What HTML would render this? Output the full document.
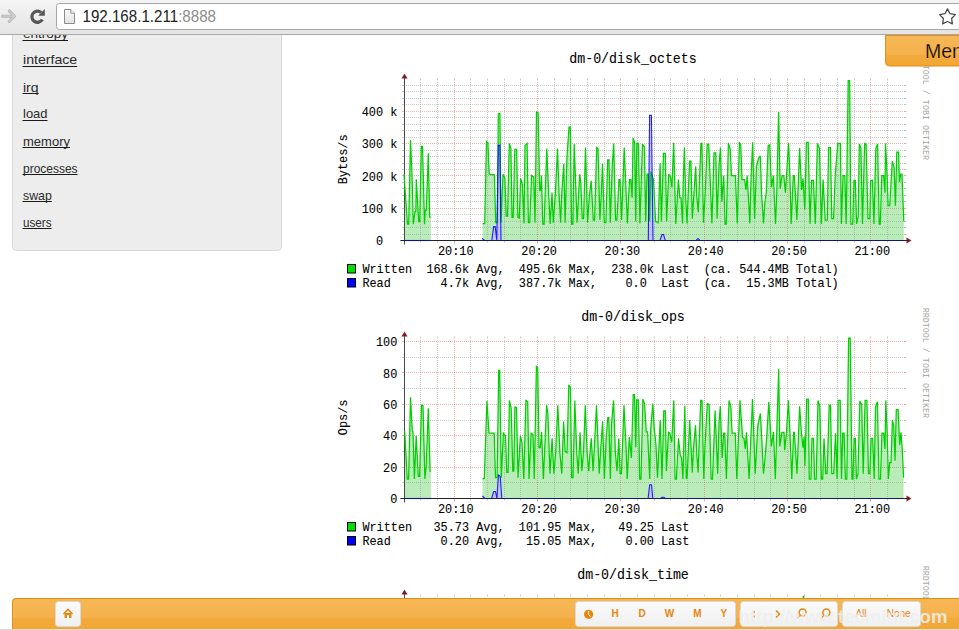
<!DOCTYPE html><html><head><meta charset="utf-8"><style>html,body{margin:0;padding:0;background:#fff;overflow:hidden;width:959px;height:630px}svg{display:block}</style></head><body>
<svg width="959" height="630" viewBox="0 0 959 630" shape-rendering="auto">
<defs><linearGradient id="chrome" x1="0" y1="0" x2="0" y2="1"><stop offset="0" stop-color="#f4f4f4"/><stop offset="1" stop-color="#e4e4e4"/></linearGradient><linearGradient id="orng" x1="0" y1="0" x2="0" y2="1"><stop offset="0" stop-color="#f6b756"/><stop offset="0.62" stop-color="#f5b24c"/><stop offset="0.66" stop-color="#f3aa3c"/><stop offset="1" stop-color="#f2a733"/></linearGradient><linearGradient id="btn" x1="0" y1="0" x2="0" y2="1"><stop offset="0" stop-color="#fafafa"/><stop offset="1" stop-color="#f0f0f0"/></linearGradient><linearGradient id="pg" x1="0" y1="0" x2="0" y2="1"><stop offset="0" stop-color="#fafafa"/><stop offset="1" stop-color="#e2e2e2"/></linearGradient></defs>
<rect x="12.5" y="-10" width="269" height="260.5" rx="4" ry="4" fill="#ededed" stroke="#d8d8d8" stroke-width="1"/>
<text x="23" y="37.9" font-family="'Liberation Sans', sans-serif" font-size="13.2" fill="#2a2a2a" textLength="45" lengthAdjust="spacingAndGlyphs">entropy</text>
<rect x="22.5" y="40" width="45.5" height="1" fill="#1a1a1a"/>
<text x="23" y="64.2" font-family="'Liberation Sans', sans-serif" font-size="13.2" fill="#2a2a2a" textLength="54.2" lengthAdjust="spacingAndGlyphs">interface</text>
<rect x="22.5" y="66" width="54.7" height="1" fill="#1a1a1a"/>
<text x="23" y="91.5" font-family="'Liberation Sans', sans-serif" font-size="13.2" fill="#2a2a2a" textLength="15.6" lengthAdjust="spacingAndGlyphs">irq</text>
<rect x="22.5" y="93" width="16.1" height="1" fill="#1a1a1a"/>
<text x="23" y="118.2" font-family="'Liberation Sans', sans-serif" font-size="13.2" fill="#2a2a2a" textLength="24.5" lengthAdjust="spacingAndGlyphs">load</text>
<rect x="22.5" y="120" width="25.0" height="1" fill="#1a1a1a"/>
<text x="23" y="145.5" font-family="'Liberation Sans', sans-serif" font-size="13.2" fill="#2a2a2a" textLength="47" lengthAdjust="spacingAndGlyphs">memory</text>
<rect x="22.5" y="147" width="47.5" height="1" fill="#1a1a1a"/>
<text x="23" y="172.5" font-family="'Liberation Sans', sans-serif" font-size="13.2" fill="#2a2a2a" textLength="54.6" lengthAdjust="spacingAndGlyphs">processes</text>
<rect x="22.5" y="174" width="55.1" height="1" fill="#1a1a1a"/>
<text x="23" y="199.5" font-family="'Liberation Sans', sans-serif" font-size="13.2" fill="#2a2a2a" textLength="28.8" lengthAdjust="spacingAndGlyphs">swap</text>
<rect x="22.5" y="201" width="29.3" height="1" fill="#1a1a1a"/>
<text x="23" y="226.5" font-family="'Liberation Sans', sans-serif" font-size="13.2" fill="#2a2a2a" textLength="28.5" lengthAdjust="spacingAndGlyphs">users</text>
<rect x="22.5" y="228" width="29.0" height="1" fill="#1a1a1a"/>
<text transform="translate(633,63) scale(1,1.1)" font-family="'Liberation Mono', monospace" font-size="13.3" text-anchor="middle" fill="#000" stroke="#000" stroke-width="0.08">dm-0/disk_octets</text>
<text transform="translate(347.2,159.4) rotate(-90) scale(1,1.1)" x="0" y="0" font-family="'Liberation Mono', monospace" font-size="11.9" text-anchor="middle" fill="#000" stroke="#000" stroke-width="0.08">Bytes/s</text>
<text transform="translate(929.5,49.80000000000001) rotate(90)" x="0" y="6.2" font-family="'Liberation Mono', monospace" font-size="8.35" fill="#a8a8a8">RRDTOOL / TOBI OETIKER</text>
<polygon points="404.0,240.5 404.0,174.2 407.5,224.2 408.7,224.2 410.5,140.0 412.0,175.0 413.3,224.2 415.0,211.7 415.8,211.7 416.3,179.2 418.7,221.7 419.7,221.7 421.3,146.3 422.5,146.3 424.5,224.2 425.3,210.0 426.3,210.0 428.3,153.3 429.7,217.0 430.8,217.0 430.8,240.5" fill="#b9ecb9"/>
<polygon points="482.6,240.5 482.6,223.5 484.7,223.5 486.5,141.5 487.9,142.8 489.2,174.2 494.4,174.8 495.7,222.7 497.3,222.7 498.3,114.0 499.9,113.5 501.0,222.7 503.0,174.2 504.9,178.2 506.2,216.0 507.5,216.0 509.3,143.4 510.9,148.6 512.0,217.4 513.2,217.4 514.8,149.4 516.6,149.4 517.9,217.4 519.3,218.0 520.6,178.2 522.4,184.7 524.0,223.5 525.0,145.4 527.1,143.4 528.4,222.7 529.7,222.7 531.6,175.5 533.7,176.9 535.0,222.7 536.5,111.9 538.1,112.7 539.7,190.0 540.7,190.0 541.5,175.5 542.8,224.0 544.1,224.0 546.8,148.6 548.6,192.6 550.2,224.0 552.0,192.6 553.3,222.7 555.4,192.6 557.5,148.6 559.0,192.6 560.6,222.7 561.7,194.0 563.8,163.8 565.1,222.7 566.9,158.5 569.0,127.1 570.3,127.1 571.6,224.0 572.9,224.0 574.2,144.1 577.1,222.7 579.7,174.2 580.8,182.0 582.3,218.7 583.6,218.7 585.5,147.5 587.6,222.7 589.4,195.2 591.2,180.8 593.3,220.0 594.6,220.0 596.7,147.5 598.0,148.6 599.9,220.0 601.2,195.2 602.5,163.8 604.3,222.7 605.9,222.7 607.7,159.8 609.0,159.8 610.3,222.7 612.2,166.4 613.7,143.6 615.6,220.0 616.9,220.0 619.0,179.5 620.0,179.5 621.6,220.0 624.2,147.5 627.4,223.5 629.5,179.5 630.8,179.5 632.1,197.8 633.1,138.1 634.7,142.8 635.7,221.4 636.8,143.4 638.4,143.4 639.9,223.5 642.5,144.1 644.4,146.8 645.7,221.4 647.0,174.2 648.3,174.2 649.6,221.4 650.9,171.6 653.5,179.5 655.6,221.4 658.2,222.7 660.1,163.2 661.4,221.4 663.5,153.3 665.3,153.3 666.6,221.4 668.7,174.2 670.5,176.9 671.9,187.3 673.7,142.8 675.8,224.0 678.4,179.5 679.9,197.8 681.0,197.8 682.6,223.5 683.1,186.0 684.4,147.5 685.7,197.8 687.0,223.5 689.6,161.2 690.9,161.2 692.3,218.7 694.1,191.3 695.7,166.4 696.7,195.2 698.3,212.2 700.9,143.4 701.9,143.4 703.5,222.7 705.3,191.3 707.2,144.1 708.7,144.1 710.6,190.0 711.9,223.5 714.0,152.8 715.8,152.8 717.1,218.7 719.0,165.0 720.5,147.5 721.8,201.7 723.7,175.5 725.0,224.0 726.3,224.0 728.4,142.8 730.2,149.4 731.5,175.5 735.4,175.5 737.3,223.5 739.4,142.8 740.7,144.1 742.0,179.5 744.6,179.5 745.9,190.0 747.2,175.5 749.8,223.5 751.2,172.9 752.7,142.3 754.6,218.7 756.4,166.4 758.5,158.5 760.3,155.9 761.6,193.9 763.5,223.5 764.8,203.0 766.3,192.6 768.2,145.4 769.7,144.9 771.5,187.3 773.4,175.5 775.5,224.0 776.8,192.6 778.6,111.9 780.2,188.6 782.0,175.5 783.8,175.5 785.4,192.6 786.5,175.5 788.6,142.8 789.9,175.5 791.2,224.0 793.3,175.5 794.3,175.5 796.9,220.0 799.6,148.1 801.6,190.0 803.0,178.2 804.8,209.6 806.4,142.3 808.2,142.3 810.0,224.0 811.6,180.3 813.4,180.3 815.3,224.0 817.4,143.4 819.5,148.6 821.3,224.0 823.1,179.5 825.2,220.0 827.3,220.0 828.6,147.5 830.4,147.5 831.8,218.7 833.6,218.7 835.2,175.5 837.8,143.4 840.4,143.4 841.4,224.0 843.0,175.5 844.8,175.5 846.2,224.0 848.2,80.7 849.6,80.7 850.9,224.0 852.7,224.0 854.0,180.3 855.3,180.3 856.6,224.0 858.2,216.1 859.3,144.1 860.9,148.0 862.5,224.0 864.6,143.4 866.1,144.1 868.0,218.7 869.8,218.7 870.6,180.3 872.4,180.3 874.0,224.0 875.8,148.6 877.6,144.1 879.2,224.0 880.3,224.0 881.8,175.5 883.7,175.5 885.0,192.6 885.5,143.4 887.1,174.2 888.1,205.7 889.7,205.7 892.3,161.2 894.1,167.7 895.4,205.7 896.8,152.0 898.6,152.0 899.4,182.1 900.7,174.2 902.0,174.2 903.8,221.4 903.8,240.5" fill="#b9ecb9"/>
<polygon points="404.0,240.5 404.0,240.5 430.8,240.5 430.8,240.5" fill="#c4c4fa"/>
<polygon points="482.1,240.5 482.1,238.4 484.7,240.5 491.8,240.5 493.6,226.6 495.2,226.6 496.8,240.5 498.3,145.4 499.9,145.4 501.0,240.5 648.3,240.5 649.6,115.3 651.4,115.3 653.0,240.5 660.1,240.5 661.9,234.5 663.5,234.5 665.3,240.5 696.0,240.5 697.5,238.8 698.5,238.8 700.0,240.5 903.8,240.5 903.8,240.5" fill="#c4c4fa"/>
<line x1="405.5" y1="85.5" x2="904.5" y2="85.5" stroke="rgba(140,140,140,0.45)" stroke-width="1" stroke-dasharray="1,1" shape-rendering="crispEdges"/>
<line x1="402.0" y1="85.5" x2="404.5" y2="85.5" stroke="rgba(140,140,140,0.45)" stroke-width="1"/>
<line x1="904.5" y1="85.5" x2="906.5" y2="85.5" stroke="rgba(140,140,140,0.45)" stroke-width="1"/>
<line x1="405.5" y1="91.5" x2="904.5" y2="91.5" stroke="rgba(140,140,140,0.45)" stroke-width="1" stroke-dasharray="1,1" shape-rendering="crispEdges"/>
<line x1="402.0" y1="91.5" x2="404.5" y2="91.5" stroke="rgba(140,140,140,0.45)" stroke-width="1"/>
<line x1="904.5" y1="91.5" x2="906.5" y2="91.5" stroke="rgba(140,140,140,0.45)" stroke-width="1"/>
<line x1="405.5" y1="98.5" x2="904.5" y2="98.5" stroke="rgba(140,140,140,0.45)" stroke-width="1" stroke-dasharray="1,1" shape-rendering="crispEdges"/>
<line x1="402.0" y1="98.5" x2="404.5" y2="98.5" stroke="rgba(140,140,140,0.45)" stroke-width="1"/>
<line x1="904.5" y1="98.5" x2="906.5" y2="98.5" stroke="rgba(140,140,140,0.45)" stroke-width="1"/>
<line x1="405.5" y1="104.5" x2="904.5" y2="104.5" stroke="rgba(140,140,140,0.45)" stroke-width="1" stroke-dasharray="1,1" shape-rendering="crispEdges"/>
<line x1="402.0" y1="104.5" x2="404.5" y2="104.5" stroke="rgba(140,140,140,0.45)" stroke-width="1"/>
<line x1="904.5" y1="104.5" x2="906.5" y2="104.5" stroke="rgba(140,140,140,0.45)" stroke-width="1"/>
<line x1="405.5" y1="111.5" x2="904.5" y2="111.5" stroke="rgba(222,79,79,0.45)" stroke-width="1" stroke-dasharray="1,1" shape-rendering="crispEdges"/>
<line x1="402.0" y1="111.5" x2="404.5" y2="111.5" stroke="rgba(222,79,79,0.45)" stroke-width="1"/>
<line x1="904.5" y1="111.5" x2="906.5" y2="111.5" stroke="rgba(222,79,79,0.45)" stroke-width="1"/>
<line x1="405.5" y1="117.5" x2="904.5" y2="117.5" stroke="rgba(140,140,140,0.45)" stroke-width="1" stroke-dasharray="1,1" shape-rendering="crispEdges"/>
<line x1="402.0" y1="117.5" x2="404.5" y2="117.5" stroke="rgba(140,140,140,0.45)" stroke-width="1"/>
<line x1="904.5" y1="117.5" x2="906.5" y2="117.5" stroke="rgba(140,140,140,0.45)" stroke-width="1"/>
<line x1="405.5" y1="124.5" x2="904.5" y2="124.5" stroke="rgba(140,140,140,0.45)" stroke-width="1" stroke-dasharray="1,1" shape-rendering="crispEdges"/>
<line x1="402.0" y1="124.5" x2="404.5" y2="124.5" stroke="rgba(140,140,140,0.45)" stroke-width="1"/>
<line x1="904.5" y1="124.5" x2="906.5" y2="124.5" stroke="rgba(140,140,140,0.45)" stroke-width="1"/>
<line x1="405.5" y1="130.5" x2="904.5" y2="130.5" stroke="rgba(140,140,140,0.45)" stroke-width="1" stroke-dasharray="1,1" shape-rendering="crispEdges"/>
<line x1="402.0" y1="130.5" x2="404.5" y2="130.5" stroke="rgba(140,140,140,0.45)" stroke-width="1"/>
<line x1="904.5" y1="130.5" x2="906.5" y2="130.5" stroke="rgba(140,140,140,0.45)" stroke-width="1"/>
<line x1="405.5" y1="137.5" x2="904.5" y2="137.5" stroke="rgba(140,140,140,0.45)" stroke-width="1" stroke-dasharray="1,1" shape-rendering="crispEdges"/>
<line x1="402.0" y1="137.5" x2="404.5" y2="137.5" stroke="rgba(140,140,140,0.45)" stroke-width="1"/>
<line x1="904.5" y1="137.5" x2="906.5" y2="137.5" stroke="rgba(140,140,140,0.45)" stroke-width="1"/>
<line x1="405.5" y1="143.5" x2="904.5" y2="143.5" stroke="rgba(222,79,79,0.45)" stroke-width="1" stroke-dasharray="1,1" shape-rendering="crispEdges"/>
<line x1="402.0" y1="143.5" x2="404.5" y2="143.5" stroke="rgba(222,79,79,0.45)" stroke-width="1"/>
<line x1="904.5" y1="143.5" x2="906.5" y2="143.5" stroke="rgba(222,79,79,0.45)" stroke-width="1"/>
<line x1="405.5" y1="150.5" x2="904.5" y2="150.5" stroke="rgba(140,140,140,0.45)" stroke-width="1" stroke-dasharray="1,1" shape-rendering="crispEdges"/>
<line x1="402.0" y1="150.5" x2="404.5" y2="150.5" stroke="rgba(140,140,140,0.45)" stroke-width="1"/>
<line x1="904.5" y1="150.5" x2="906.5" y2="150.5" stroke="rgba(140,140,140,0.45)" stroke-width="1"/>
<line x1="405.5" y1="156.5" x2="904.5" y2="156.5" stroke="rgba(140,140,140,0.45)" stroke-width="1" stroke-dasharray="1,1" shape-rendering="crispEdges"/>
<line x1="402.0" y1="156.5" x2="404.5" y2="156.5" stroke="rgba(140,140,140,0.45)" stroke-width="1"/>
<line x1="904.5" y1="156.5" x2="906.5" y2="156.5" stroke="rgba(140,140,140,0.45)" stroke-width="1"/>
<line x1="405.5" y1="163.5" x2="904.5" y2="163.5" stroke="rgba(140,140,140,0.45)" stroke-width="1" stroke-dasharray="1,1" shape-rendering="crispEdges"/>
<line x1="402.0" y1="163.5" x2="404.5" y2="163.5" stroke="rgba(140,140,140,0.45)" stroke-width="1"/>
<line x1="904.5" y1="163.5" x2="906.5" y2="163.5" stroke="rgba(140,140,140,0.45)" stroke-width="1"/>
<line x1="405.5" y1="169.5" x2="904.5" y2="169.5" stroke="rgba(140,140,140,0.45)" stroke-width="1" stroke-dasharray="1,1" shape-rendering="crispEdges"/>
<line x1="402.0" y1="169.5" x2="404.5" y2="169.5" stroke="rgba(140,140,140,0.45)" stroke-width="1"/>
<line x1="904.5" y1="169.5" x2="906.5" y2="169.5" stroke="rgba(140,140,140,0.45)" stroke-width="1"/>
<line x1="405.5" y1="175.5" x2="904.5" y2="175.5" stroke="rgba(222,79,79,0.45)" stroke-width="1" stroke-dasharray="1,1" shape-rendering="crispEdges"/>
<line x1="402.0" y1="175.5" x2="404.5" y2="175.5" stroke="rgba(222,79,79,0.45)" stroke-width="1"/>
<line x1="904.5" y1="175.5" x2="906.5" y2="175.5" stroke="rgba(222,79,79,0.45)" stroke-width="1"/>
<line x1="405.5" y1="182.5" x2="904.5" y2="182.5" stroke="rgba(140,140,140,0.45)" stroke-width="1" stroke-dasharray="1,1" shape-rendering="crispEdges"/>
<line x1="402.0" y1="182.5" x2="404.5" y2="182.5" stroke="rgba(140,140,140,0.45)" stroke-width="1"/>
<line x1="904.5" y1="182.5" x2="906.5" y2="182.5" stroke="rgba(140,140,140,0.45)" stroke-width="1"/>
<line x1="405.5" y1="188.5" x2="904.5" y2="188.5" stroke="rgba(140,140,140,0.45)" stroke-width="1" stroke-dasharray="1,1" shape-rendering="crispEdges"/>
<line x1="402.0" y1="188.5" x2="404.5" y2="188.5" stroke="rgba(140,140,140,0.45)" stroke-width="1"/>
<line x1="904.5" y1="188.5" x2="906.5" y2="188.5" stroke="rgba(140,140,140,0.45)" stroke-width="1"/>
<line x1="405.5" y1="195.5" x2="904.5" y2="195.5" stroke="rgba(140,140,140,0.45)" stroke-width="1" stroke-dasharray="1,1" shape-rendering="crispEdges"/>
<line x1="402.0" y1="195.5" x2="404.5" y2="195.5" stroke="rgba(140,140,140,0.45)" stroke-width="1"/>
<line x1="904.5" y1="195.5" x2="906.5" y2="195.5" stroke="rgba(140,140,140,0.45)" stroke-width="1"/>
<line x1="405.5" y1="201.5" x2="904.5" y2="201.5" stroke="rgba(140,140,140,0.45)" stroke-width="1" stroke-dasharray="1,1" shape-rendering="crispEdges"/>
<line x1="402.0" y1="201.5" x2="404.5" y2="201.5" stroke="rgba(140,140,140,0.45)" stroke-width="1"/>
<line x1="904.5" y1="201.5" x2="906.5" y2="201.5" stroke="rgba(140,140,140,0.45)" stroke-width="1"/>
<line x1="405.5" y1="208.5" x2="904.5" y2="208.5" stroke="rgba(222,79,79,0.45)" stroke-width="1" stroke-dasharray="1,1" shape-rendering="crispEdges"/>
<line x1="402.0" y1="208.5" x2="404.5" y2="208.5" stroke="rgba(222,79,79,0.45)" stroke-width="1"/>
<line x1="904.5" y1="208.5" x2="906.5" y2="208.5" stroke="rgba(222,79,79,0.45)" stroke-width="1"/>
<line x1="405.5" y1="214.5" x2="904.5" y2="214.5" stroke="rgba(140,140,140,0.45)" stroke-width="1" stroke-dasharray="1,1" shape-rendering="crispEdges"/>
<line x1="402.0" y1="214.5" x2="404.5" y2="214.5" stroke="rgba(140,140,140,0.45)" stroke-width="1"/>
<line x1="904.5" y1="214.5" x2="906.5" y2="214.5" stroke="rgba(140,140,140,0.45)" stroke-width="1"/>
<line x1="405.5" y1="221.5" x2="904.5" y2="221.5" stroke="rgba(140,140,140,0.45)" stroke-width="1" stroke-dasharray="1,1" shape-rendering="crispEdges"/>
<line x1="402.0" y1="221.5" x2="404.5" y2="221.5" stroke="rgba(140,140,140,0.45)" stroke-width="1"/>
<line x1="904.5" y1="221.5" x2="906.5" y2="221.5" stroke="rgba(140,140,140,0.45)" stroke-width="1"/>
<line x1="405.5" y1="227.5" x2="904.5" y2="227.5" stroke="rgba(140,140,140,0.45)" stroke-width="1" stroke-dasharray="1,1" shape-rendering="crispEdges"/>
<line x1="402.0" y1="227.5" x2="404.5" y2="227.5" stroke="rgba(140,140,140,0.45)" stroke-width="1"/>
<line x1="904.5" y1="227.5" x2="906.5" y2="227.5" stroke="rgba(140,140,140,0.45)" stroke-width="1"/>
<line x1="405.5" y1="234.5" x2="904.5" y2="234.5" stroke="rgba(140,140,140,0.45)" stroke-width="1" stroke-dasharray="1,1" shape-rendering="crispEdges"/>
<line x1="402.0" y1="234.5" x2="404.5" y2="234.5" stroke="rgba(140,140,140,0.45)" stroke-width="1"/>
<line x1="904.5" y1="234.5" x2="906.5" y2="234.5" stroke="rgba(140,140,140,0.45)" stroke-width="1"/>
<line x1="420.5" y1="80.5" x2="420.5" y2="240.5" stroke="rgba(140,140,140,0.45)" stroke-width="1" stroke-dasharray="1,1" stroke-dashoffset="1" shape-rendering="crispEdges"/>
<line x1="420.5" y1="78.5" x2="420.5" y2="80.5" stroke="rgba(140,140,140,0.45)" stroke-width="1"/>
<line x1="420.5" y1="240.5" x2="420.5" y2="242.5" stroke="rgba(140,140,140,0.45)" stroke-width="1"/>
<line x1="437.5" y1="80.5" x2="437.5" y2="240.5" stroke="rgba(140,140,140,0.45)" stroke-width="1" stroke-dasharray="1,1" stroke-dashoffset="1" shape-rendering="crispEdges"/>
<line x1="437.5" y1="78.5" x2="437.5" y2="80.5" stroke="rgba(140,140,140,0.45)" stroke-width="1"/>
<line x1="437.5" y1="240.5" x2="437.5" y2="242.5" stroke="rgba(140,140,140,0.45)" stroke-width="1"/>
<line x1="454.5" y1="80.5" x2="454.5" y2="240.5" stroke="rgba(222,79,79,0.45)" stroke-width="1" stroke-dasharray="1,1" stroke-dashoffset="1" shape-rendering="crispEdges"/>
<line x1="454.5" y1="78.5" x2="454.5" y2="80.5" stroke="rgba(222,79,79,0.45)" stroke-width="1"/>
<line x1="454.5" y1="240.5" x2="454.5" y2="243.5" stroke="rgba(222,79,79,0.45)" stroke-width="1"/>
<line x1="470.5" y1="80.5" x2="470.5" y2="240.5" stroke="rgba(140,140,140,0.45)" stroke-width="1" stroke-dasharray="1,1" stroke-dashoffset="1" shape-rendering="crispEdges"/>
<line x1="470.5" y1="78.5" x2="470.5" y2="80.5" stroke="rgba(140,140,140,0.45)" stroke-width="1"/>
<line x1="470.5" y1="240.5" x2="470.5" y2="242.5" stroke="rgba(140,140,140,0.45)" stroke-width="1"/>
<line x1="487.5" y1="80.5" x2="487.5" y2="240.5" stroke="rgba(140,140,140,0.45)" stroke-width="1" stroke-dasharray="1,1" stroke-dashoffset="1" shape-rendering="crispEdges"/>
<line x1="487.5" y1="78.5" x2="487.5" y2="80.5" stroke="rgba(140,140,140,0.45)" stroke-width="1"/>
<line x1="487.5" y1="240.5" x2="487.5" y2="242.5" stroke="rgba(140,140,140,0.45)" stroke-width="1"/>
<line x1="504.5" y1="80.5" x2="504.5" y2="240.5" stroke="rgba(140,140,140,0.45)" stroke-width="1" stroke-dasharray="1,1" stroke-dashoffset="1" shape-rendering="crispEdges"/>
<line x1="504.5" y1="78.5" x2="504.5" y2="80.5" stroke="rgba(140,140,140,0.45)" stroke-width="1"/>
<line x1="504.5" y1="240.5" x2="504.5" y2="242.5" stroke="rgba(140,140,140,0.45)" stroke-width="1"/>
<line x1="520.5" y1="80.5" x2="520.5" y2="240.5" stroke="rgba(140,140,140,0.45)" stroke-width="1" stroke-dasharray="1,1" stroke-dashoffset="1" shape-rendering="crispEdges"/>
<line x1="520.5" y1="78.5" x2="520.5" y2="80.5" stroke="rgba(140,140,140,0.45)" stroke-width="1"/>
<line x1="520.5" y1="240.5" x2="520.5" y2="242.5" stroke="rgba(140,140,140,0.45)" stroke-width="1"/>
<line x1="537.5" y1="80.5" x2="537.5" y2="240.5" stroke="rgba(222,79,79,0.45)" stroke-width="1" stroke-dasharray="1,1" stroke-dashoffset="1" shape-rendering="crispEdges"/>
<line x1="537.5" y1="78.5" x2="537.5" y2="80.5" stroke="rgba(222,79,79,0.45)" stroke-width="1"/>
<line x1="537.5" y1="240.5" x2="537.5" y2="243.5" stroke="rgba(222,79,79,0.45)" stroke-width="1"/>
<line x1="554.5" y1="80.5" x2="554.5" y2="240.5" stroke="rgba(140,140,140,0.45)" stroke-width="1" stroke-dasharray="1,1" stroke-dashoffset="1" shape-rendering="crispEdges"/>
<line x1="554.5" y1="78.5" x2="554.5" y2="80.5" stroke="rgba(140,140,140,0.45)" stroke-width="1"/>
<line x1="554.5" y1="240.5" x2="554.5" y2="242.5" stroke="rgba(140,140,140,0.45)" stroke-width="1"/>
<line x1="570.5" y1="80.5" x2="570.5" y2="240.5" stroke="rgba(140,140,140,0.45)" stroke-width="1" stroke-dasharray="1,1" stroke-dashoffset="1" shape-rendering="crispEdges"/>
<line x1="570.5" y1="78.5" x2="570.5" y2="80.5" stroke="rgba(140,140,140,0.45)" stroke-width="1"/>
<line x1="570.5" y1="240.5" x2="570.5" y2="242.5" stroke="rgba(140,140,140,0.45)" stroke-width="1"/>
<line x1="587.5" y1="80.5" x2="587.5" y2="240.5" stroke="rgba(140,140,140,0.45)" stroke-width="1" stroke-dasharray="1,1" stroke-dashoffset="1" shape-rendering="crispEdges"/>
<line x1="587.5" y1="78.5" x2="587.5" y2="80.5" stroke="rgba(140,140,140,0.45)" stroke-width="1"/>
<line x1="587.5" y1="240.5" x2="587.5" y2="242.5" stroke="rgba(140,140,140,0.45)" stroke-width="1"/>
<line x1="604.5" y1="80.5" x2="604.5" y2="240.5" stroke="rgba(140,140,140,0.45)" stroke-width="1" stroke-dasharray="1,1" stroke-dashoffset="1" shape-rendering="crispEdges"/>
<line x1="604.5" y1="78.5" x2="604.5" y2="80.5" stroke="rgba(140,140,140,0.45)" stroke-width="1"/>
<line x1="604.5" y1="240.5" x2="604.5" y2="242.5" stroke="rgba(140,140,140,0.45)" stroke-width="1"/>
<line x1="620.5" y1="80.5" x2="620.5" y2="240.5" stroke="rgba(222,79,79,0.45)" stroke-width="1" stroke-dasharray="1,1" stroke-dashoffset="1" shape-rendering="crispEdges"/>
<line x1="620.5" y1="78.5" x2="620.5" y2="80.5" stroke="rgba(222,79,79,0.45)" stroke-width="1"/>
<line x1="620.5" y1="240.5" x2="620.5" y2="243.5" stroke="rgba(222,79,79,0.45)" stroke-width="1"/>
<line x1="637.5" y1="80.5" x2="637.5" y2="240.5" stroke="rgba(140,140,140,0.45)" stroke-width="1" stroke-dasharray="1,1" stroke-dashoffset="1" shape-rendering="crispEdges"/>
<line x1="637.5" y1="78.5" x2="637.5" y2="80.5" stroke="rgba(140,140,140,0.45)" stroke-width="1"/>
<line x1="637.5" y1="240.5" x2="637.5" y2="242.5" stroke="rgba(140,140,140,0.45)" stroke-width="1"/>
<line x1="654.5" y1="80.5" x2="654.5" y2="240.5" stroke="rgba(140,140,140,0.45)" stroke-width="1" stroke-dasharray="1,1" stroke-dashoffset="1" shape-rendering="crispEdges"/>
<line x1="654.5" y1="78.5" x2="654.5" y2="80.5" stroke="rgba(140,140,140,0.45)" stroke-width="1"/>
<line x1="654.5" y1="240.5" x2="654.5" y2="242.5" stroke="rgba(140,140,140,0.45)" stroke-width="1"/>
<line x1="670.5" y1="80.5" x2="670.5" y2="240.5" stroke="rgba(140,140,140,0.45)" stroke-width="1" stroke-dasharray="1,1" stroke-dashoffset="1" shape-rendering="crispEdges"/>
<line x1="670.5" y1="78.5" x2="670.5" y2="80.5" stroke="rgba(140,140,140,0.45)" stroke-width="1"/>
<line x1="670.5" y1="240.5" x2="670.5" y2="242.5" stroke="rgba(140,140,140,0.45)" stroke-width="1"/>
<line x1="687.5" y1="80.5" x2="687.5" y2="240.5" stroke="rgba(140,140,140,0.45)" stroke-width="1" stroke-dasharray="1,1" stroke-dashoffset="1" shape-rendering="crispEdges"/>
<line x1="687.5" y1="78.5" x2="687.5" y2="80.5" stroke="rgba(140,140,140,0.45)" stroke-width="1"/>
<line x1="687.5" y1="240.5" x2="687.5" y2="242.5" stroke="rgba(140,140,140,0.45)" stroke-width="1"/>
<line x1="704.5" y1="80.5" x2="704.5" y2="240.5" stroke="rgba(222,79,79,0.45)" stroke-width="1" stroke-dasharray="1,1" stroke-dashoffset="1" shape-rendering="crispEdges"/>
<line x1="704.5" y1="78.5" x2="704.5" y2="80.5" stroke="rgba(222,79,79,0.45)" stroke-width="1"/>
<line x1="704.5" y1="240.5" x2="704.5" y2="243.5" stroke="rgba(222,79,79,0.45)" stroke-width="1"/>
<line x1="720.5" y1="80.5" x2="720.5" y2="240.5" stroke="rgba(140,140,140,0.45)" stroke-width="1" stroke-dasharray="1,1" stroke-dashoffset="1" shape-rendering="crispEdges"/>
<line x1="720.5" y1="78.5" x2="720.5" y2="80.5" stroke="rgba(140,140,140,0.45)" stroke-width="1"/>
<line x1="720.5" y1="240.5" x2="720.5" y2="242.5" stroke="rgba(140,140,140,0.45)" stroke-width="1"/>
<line x1="737.5" y1="80.5" x2="737.5" y2="240.5" stroke="rgba(140,140,140,0.45)" stroke-width="1" stroke-dasharray="1,1" stroke-dashoffset="1" shape-rendering="crispEdges"/>
<line x1="737.5" y1="78.5" x2="737.5" y2="80.5" stroke="rgba(140,140,140,0.45)" stroke-width="1"/>
<line x1="737.5" y1="240.5" x2="737.5" y2="242.5" stroke="rgba(140,140,140,0.45)" stroke-width="1"/>
<line x1="754.5" y1="80.5" x2="754.5" y2="240.5" stroke="rgba(140,140,140,0.45)" stroke-width="1" stroke-dasharray="1,1" stroke-dashoffset="1" shape-rendering="crispEdges"/>
<line x1="754.5" y1="78.5" x2="754.5" y2="80.5" stroke="rgba(140,140,140,0.45)" stroke-width="1"/>
<line x1="754.5" y1="240.5" x2="754.5" y2="242.5" stroke="rgba(140,140,140,0.45)" stroke-width="1"/>
<line x1="770.5" y1="80.5" x2="770.5" y2="240.5" stroke="rgba(140,140,140,0.45)" stroke-width="1" stroke-dasharray="1,1" stroke-dashoffset="1" shape-rendering="crispEdges"/>
<line x1="770.5" y1="78.5" x2="770.5" y2="80.5" stroke="rgba(140,140,140,0.45)" stroke-width="1"/>
<line x1="770.5" y1="240.5" x2="770.5" y2="242.5" stroke="rgba(140,140,140,0.45)" stroke-width="1"/>
<line x1="787.5" y1="80.5" x2="787.5" y2="240.5" stroke="rgba(222,79,79,0.45)" stroke-width="1" stroke-dasharray="1,1" stroke-dashoffset="1" shape-rendering="crispEdges"/>
<line x1="787.5" y1="78.5" x2="787.5" y2="80.5" stroke="rgba(222,79,79,0.45)" stroke-width="1"/>
<line x1="787.5" y1="240.5" x2="787.5" y2="243.5" stroke="rgba(222,79,79,0.45)" stroke-width="1"/>
<line x1="804.5" y1="80.5" x2="804.5" y2="240.5" stroke="rgba(140,140,140,0.45)" stroke-width="1" stroke-dasharray="1,1" stroke-dashoffset="1" shape-rendering="crispEdges"/>
<line x1="804.5" y1="78.5" x2="804.5" y2="80.5" stroke="rgba(140,140,140,0.45)" stroke-width="1"/>
<line x1="804.5" y1="240.5" x2="804.5" y2="242.5" stroke="rgba(140,140,140,0.45)" stroke-width="1"/>
<line x1="820.5" y1="80.5" x2="820.5" y2="240.5" stroke="rgba(140,140,140,0.45)" stroke-width="1" stroke-dasharray="1,1" stroke-dashoffset="1" shape-rendering="crispEdges"/>
<line x1="820.5" y1="78.5" x2="820.5" y2="80.5" stroke="rgba(140,140,140,0.45)" stroke-width="1"/>
<line x1="820.5" y1="240.5" x2="820.5" y2="242.5" stroke="rgba(140,140,140,0.45)" stroke-width="1"/>
<line x1="837.5" y1="80.5" x2="837.5" y2="240.5" stroke="rgba(140,140,140,0.45)" stroke-width="1" stroke-dasharray="1,1" stroke-dashoffset="1" shape-rendering="crispEdges"/>
<line x1="837.5" y1="78.5" x2="837.5" y2="80.5" stroke="rgba(140,140,140,0.45)" stroke-width="1"/>
<line x1="837.5" y1="240.5" x2="837.5" y2="242.5" stroke="rgba(140,140,140,0.45)" stroke-width="1"/>
<line x1="854.5" y1="80.5" x2="854.5" y2="240.5" stroke="rgba(140,140,140,0.45)" stroke-width="1" stroke-dasharray="1,1" stroke-dashoffset="1" shape-rendering="crispEdges"/>
<line x1="854.5" y1="78.5" x2="854.5" y2="80.5" stroke="rgba(140,140,140,0.45)" stroke-width="1"/>
<line x1="854.5" y1="240.5" x2="854.5" y2="242.5" stroke="rgba(140,140,140,0.45)" stroke-width="1"/>
<line x1="870.5" y1="80.5" x2="870.5" y2="240.5" stroke="rgba(222,79,79,0.45)" stroke-width="1" stroke-dasharray="1,1" stroke-dashoffset="1" shape-rendering="crispEdges"/>
<line x1="870.5" y1="78.5" x2="870.5" y2="80.5" stroke="rgba(222,79,79,0.45)" stroke-width="1"/>
<line x1="870.5" y1="240.5" x2="870.5" y2="243.5" stroke="rgba(222,79,79,0.45)" stroke-width="1"/>
<line x1="887.5" y1="80.5" x2="887.5" y2="240.5" stroke="rgba(140,140,140,0.45)" stroke-width="1" stroke-dasharray="1,1" stroke-dashoffset="1" shape-rendering="crispEdges"/>
<line x1="887.5" y1="78.5" x2="887.5" y2="80.5" stroke="rgba(140,140,140,0.45)" stroke-width="1"/>
<line x1="887.5" y1="240.5" x2="887.5" y2="242.5" stroke="rgba(140,140,140,0.45)" stroke-width="1"/>
<line x1="400.5" y1="240.5" x2="908.5" y2="240.5" stroke="#222" stroke-width="1"/>
<line x1="404.5" y1="244.5" x2="404.5" y2="76.5" stroke="#4a4a4a" stroke-width="1"/>
<polygon points="906.5,237.5 906.5,243.5 911.5,240.5" fill="#801f1f"/>
<polygon points="401.5,78.5 407.5,78.5 404.5,73.5" fill="#801f1f"/>
<polyline points="404.0,174.2 407.5,224.2 408.7,224.2 410.5,140.0 412.0,175.0 413.3,224.2 415.0,211.7 415.8,211.7 416.3,179.2 418.7,221.7 419.7,221.7 421.3,146.3 422.5,146.3 424.5,224.2 425.3,210.0 426.3,210.0 428.3,153.3 429.7,217.0 430.8,217.0" fill="none" stroke="#00d000" stroke-width="1.25" stroke-linejoin="miter" stroke-miterlimit="3"/>
<polyline points="482.6,223.5 484.7,223.5 486.5,141.5 487.9,142.8 489.2,174.2 494.4,174.8 495.7,222.7 497.3,222.7 498.3,114.0 499.9,113.5 501.0,222.7 503.0,174.2 504.9,178.2 506.2,216.0 507.5,216.0 509.3,143.4 510.9,148.6 512.0,217.4 513.2,217.4 514.8,149.4 516.6,149.4 517.9,217.4 519.3,218.0 520.6,178.2 522.4,184.7 524.0,223.5 525.0,145.4 527.1,143.4 528.4,222.7 529.7,222.7 531.6,175.5 533.7,176.9 535.0,222.7 536.5,111.9 538.1,112.7 539.7,190.0 540.7,190.0 541.5,175.5 542.8,224.0 544.1,224.0 546.8,148.6 548.6,192.6 550.2,224.0 552.0,192.6 553.3,222.7 555.4,192.6 557.5,148.6 559.0,192.6 560.6,222.7 561.7,194.0 563.8,163.8 565.1,222.7 566.9,158.5 569.0,127.1 570.3,127.1 571.6,224.0 572.9,224.0 574.2,144.1 577.1,222.7 579.7,174.2 580.8,182.0 582.3,218.7 583.6,218.7 585.5,147.5 587.6,222.7 589.4,195.2 591.2,180.8 593.3,220.0 594.6,220.0 596.7,147.5 598.0,148.6 599.9,220.0 601.2,195.2 602.5,163.8 604.3,222.7 605.9,222.7 607.7,159.8 609.0,159.8 610.3,222.7 612.2,166.4 613.7,143.6 615.6,220.0 616.9,220.0 619.0,179.5 620.0,179.5 621.6,220.0 624.2,147.5 627.4,223.5 629.5,179.5 630.8,179.5 632.1,197.8 633.1,138.1 634.7,142.8 635.7,221.4 636.8,143.4 638.4,143.4 639.9,223.5 642.5,144.1 644.4,146.8 645.7,221.4 647.0,174.2 648.3,174.2 649.6,221.4 650.9,171.6 653.5,179.5 655.6,221.4 658.2,222.7 660.1,163.2 661.4,221.4 663.5,153.3 665.3,153.3 666.6,221.4 668.7,174.2 670.5,176.9 671.9,187.3 673.7,142.8 675.8,224.0 678.4,179.5 679.9,197.8 681.0,197.8 682.6,223.5 683.1,186.0 684.4,147.5 685.7,197.8 687.0,223.5 689.6,161.2 690.9,161.2 692.3,218.7 694.1,191.3 695.7,166.4 696.7,195.2 698.3,212.2 700.9,143.4 701.9,143.4 703.5,222.7 705.3,191.3 707.2,144.1 708.7,144.1 710.6,190.0 711.9,223.5 714.0,152.8 715.8,152.8 717.1,218.7 719.0,165.0 720.5,147.5 721.8,201.7 723.7,175.5 725.0,224.0 726.3,224.0 728.4,142.8 730.2,149.4 731.5,175.5 735.4,175.5 737.3,223.5 739.4,142.8 740.7,144.1 742.0,179.5 744.6,179.5 745.9,190.0 747.2,175.5 749.8,223.5 751.2,172.9 752.7,142.3 754.6,218.7 756.4,166.4 758.5,158.5 760.3,155.9 761.6,193.9 763.5,223.5 764.8,203.0 766.3,192.6 768.2,145.4 769.7,144.9 771.5,187.3 773.4,175.5 775.5,224.0 776.8,192.6 778.6,111.9 780.2,188.6 782.0,175.5 783.8,175.5 785.4,192.6 786.5,175.5 788.6,142.8 789.9,175.5 791.2,224.0 793.3,175.5 794.3,175.5 796.9,220.0 799.6,148.1 801.6,190.0 803.0,178.2 804.8,209.6 806.4,142.3 808.2,142.3 810.0,224.0 811.6,180.3 813.4,180.3 815.3,224.0 817.4,143.4 819.5,148.6 821.3,224.0 823.1,179.5 825.2,220.0 827.3,220.0 828.6,147.5 830.4,147.5 831.8,218.7 833.6,218.7 835.2,175.5 837.8,143.4 840.4,143.4 841.4,224.0 843.0,175.5 844.8,175.5 846.2,224.0 848.2,80.7 849.6,80.7 850.9,224.0 852.7,224.0 854.0,180.3 855.3,180.3 856.6,224.0 858.2,216.1 859.3,144.1 860.9,148.0 862.5,224.0 864.6,143.4 866.1,144.1 868.0,218.7 869.8,218.7 870.6,180.3 872.4,180.3 874.0,224.0 875.8,148.6 877.6,144.1 879.2,224.0 880.3,224.0 881.8,175.5 883.7,175.5 885.0,192.6 885.5,143.4 887.1,174.2 888.1,205.7 889.7,205.7 892.3,161.2 894.1,167.7 895.4,205.7 896.8,152.0 898.6,152.0 899.4,182.1 900.7,174.2 902.0,174.2 903.8,221.4" fill="none" stroke="#00d000" stroke-width="1.25" stroke-linejoin="miter" stroke-miterlimit="3"/>
<polyline points="404.0,240.5 430.8,240.5" fill="none" stroke="#0000ff" stroke-width="1.1" stroke-opacity="0.85" stroke-linejoin="miter" stroke-miterlimit="3"/>
<polyline points="482.1,238.4 484.7,240.5 491.8,240.5 493.6,226.6 495.2,226.6 496.8,240.5 498.3,145.4 499.9,145.4 501.0,240.5 648.3,240.5 649.6,115.3 651.4,115.3 653.0,240.5 660.1,240.5 661.9,234.5 663.5,234.5 665.3,240.5 696.0,240.5 697.5,238.8 698.5,238.8 700.0,240.5 903.8,240.5" fill="none" stroke="#0000ff" stroke-width="1.1" stroke-opacity="0.85" stroke-linejoin="miter" stroke-miterlimit="3"/>
<line x1="400.5" y1="240.5" x2="908.5" y2="240.5" stroke="#222" stroke-opacity="0.5" stroke-width="1"/>
<text transform="translate(397.4,116.2) scale(1,1.1)" font-family="'Liberation Mono', monospace" font-size="11.9" text-anchor="end" fill="#000" stroke="#000" stroke-width="0.08">400 k</text>
<text transform="translate(397.4,148.4) scale(1,1.1)" font-family="'Liberation Mono', monospace" font-size="11.9" text-anchor="end" fill="#000" stroke="#000" stroke-width="0.08">300 k</text>
<text transform="translate(397.4,180.70000000000002) scale(1,1.1)" font-family="'Liberation Mono', monospace" font-size="11.9" text-anchor="end" fill="#000" stroke="#000" stroke-width="0.08">200 k</text>
<text transform="translate(397.4,212.9) scale(1,1.1)" font-family="'Liberation Mono', monospace" font-size="11.9" text-anchor="end" fill="#000" stroke="#000" stroke-width="0.08">100 k</text>
<text transform="translate(383.2,245.10000000000002) scale(1,1.1)" font-family="'Liberation Mono', monospace" font-size="11.9" text-anchor="end" fill="#000" stroke="#000" stroke-width="0.08">0</text>
<text transform="translate(455.8,254.6) scale(1,1.1)" font-family="'Liberation Mono', monospace" font-size="11.9" text-anchor="middle" fill="#000" stroke="#000" stroke-width="0.08">20:10</text>
<text transform="translate(539.1,254.6) scale(1,1.1)" font-family="'Liberation Mono', monospace" font-size="11.9" text-anchor="middle" fill="#000" stroke="#000" stroke-width="0.08">20:20</text>
<text transform="translate(622.4,254.6) scale(1,1.1)" font-family="'Liberation Mono', monospace" font-size="11.9" text-anchor="middle" fill="#000" stroke="#000" stroke-width="0.08">20:30</text>
<text transform="translate(705.7,254.6) scale(1,1.1)" font-family="'Liberation Mono', monospace" font-size="11.9" text-anchor="middle" fill="#000" stroke="#000" stroke-width="0.08">20:40</text>
<text transform="translate(789.0,254.6) scale(1,1.1)" font-family="'Liberation Mono', monospace" font-size="11.9" text-anchor="middle" fill="#000" stroke="#000" stroke-width="0.08">20:50</text>
<text transform="translate(872.3,254.6) scale(1,1.1)" font-family="'Liberation Mono', monospace" font-size="11.9" text-anchor="middle" fill="#000" stroke="#000" stroke-width="0.08">21:00</text>
<rect x="347.5" y="264.5" width="8" height="8.5" fill="#00dd00" stroke="#000" stroke-width="1"/>
<rect x="347.5" y="278.5" width="8" height="8.5" fill="#0000ff" stroke="#000" stroke-width="1"/>
<text transform="translate(362.4,272.6) scale(1,1.1)" font-family="'Liberation Mono', monospace" font-size="11.86" fill="#000" stroke="#000" stroke-width="0.08" xml:space="preserve">Written  168.6k Avg,  495.6k Max,  238.0k Last  (ca. 544.4MB Total)</text>
<text transform="translate(362.4,286.90000000000003) scale(1,1.1)" font-family="'Liberation Mono', monospace" font-size="11.86" fill="#000" stroke="#000" stroke-width="0.08" xml:space="preserve">Read       4.7k Avg,  387.7k Max,    0.0  Last  (ca.  15.3MB Total)</text>
<text transform="translate(633,321) scale(1,1.1)" font-family="'Liberation Mono', monospace" font-size="13.3" text-anchor="middle" fill="#000" stroke="#000" stroke-width="0.08">dm-0/disk_ops</text>
<text transform="translate(347.2,417.4) rotate(-90) scale(1,1.1)" x="0" y="0" font-family="'Liberation Mono', monospace" font-size="11.9" text-anchor="middle" fill="#000" stroke="#000" stroke-width="0.08">Ops/s</text>
<text transform="translate(929.5,307.8) rotate(90)" x="0" y="6.2" font-family="'Liberation Mono', monospace" font-size="8.35" fill="#a8a8a8">RRDTOOL / TOBI OETIKER</text>
<polygon points="404.7,498.5 404.7,431.3 407.3,479.0 408.6,479.0 410.5,397.3 412.3,431.3 413.0,431.8 414.4,479.0 416.2,435.8 418.3,476.4 419.6,476.4 421.5,405.2 423.0,405.7 424.9,479.0 426.2,465.9 428.3,408.3 430.1,471.1 430.9,471.1 430.9,498.5" fill="#b9ecb9"/>
<polygon points="482.5,498.5 482.5,478.5 484.3,478.5 486.9,401.0 489.0,433.2 494.2,433.2 495.5,477.7 497.1,477.7 498.7,370.3 499.7,370.3 501.3,477.7 503.4,433.2 505.5,435.8 506.8,472.4 508.1,472.4 509.4,400.4 511.2,408.3 512.8,471.1 513.8,471.1 514.9,407.0 516.5,407.5 518.0,477.7 520.4,435.8 522.0,442.3 523.8,479.0 525.9,400.4 527.7,401.5 529.0,479.0 531.1,433.2 533.0,434.5 534.3,479.0 536.4,366.4 537.7,367.7 539.0,447.6 540.3,447.6 541.6,431.9 543.4,479.0 546.6,405.2 547.9,413.5 550.0,473.7 552.1,438.4 553.9,473.7 555.7,451.5 557.8,405.2 559.9,452.8 561.8,473.7 563.6,421.4 565.2,451.5 567.0,452.8 568.8,384.7 570.4,387.4 571.7,477.7 573.0,477.7 574.8,400.4 576.7,451.5 578.2,473.7 580.1,432.4 581.9,471.1 583.5,451.5 585.3,405.2 587.1,452.8 588.7,471.1 590.5,446.3 591.3,438.4 593.1,471.1 596.5,405.2 599.2,473.7 600.5,452.8 602.6,421.4 604.4,479.0 606.2,437.1 607.8,417.5 608.8,417.5 610.4,479.0 611.5,424.0 613.6,400.4 615.4,452.8 617.0,471.1 618.8,438.4 620.1,473.7 621.4,473.7 624.0,405.2 626.1,447.6 627.2,479.0 629.3,437.1 631.4,458.0 633.2,394.7 634.5,394.7 635.8,447.6 636.6,399.9 638.4,399.9 639.7,479.0 641.0,479.0 642.9,399.1 644.5,403.6 646.3,431.9 647.6,431.9 649.7,479.0 650.7,429.2 652.8,403.6 654.1,426.6 656.0,445.0 657.5,477.7 660.2,420.1 662.0,479.0 663.8,410.9 665.4,410.9 666.4,471.1 668.5,432.4 669.8,433.2 671.7,442.3 673.8,400.4 675.1,479.0 676.4,479.0 678.5,438.4 680.3,455.4 681.6,458.0 682.9,479.0 684.8,405.7 686.3,479.0 687.1,477.7 689.7,420.1 692.3,472.4 693.4,448.9 695.5,425.3 696.8,454.1 698.1,472.4 700.7,400.4 702.0,400.4 703.8,479.0 704.9,447.6 707.3,403.6 709.1,404.4 711.2,479.0 712.5,479.0 715.1,410.4 717.7,473.7 719.0,422.7 720.3,406.2 722.2,458.0 723.7,433.2 724.8,433.2 726.4,479.0 729.0,400.4 730.8,406.2 732.1,433.2 735.3,433.2 736.8,479.0 740.0,400.4 742.6,437.6 744.0,438.4 745.2,448.9 746.5,432.4 749.1,479.0 752.5,399.1 755.2,473.7 757.8,425.3 760.4,413.5 762.2,447.6 763.5,473.7 764.8,460.7 766.7,437.1 768.8,401.8 771.4,446.3 773.5,431.9 775.3,479.0 778.7,369.0 779.8,446.3 781.9,432.4 784.0,432.4 784.7,450.2 786.5,431.9 788.4,400.4 789.9,431.9 791.8,479.0 793.6,432.4 794.4,432.4 797.0,473.7 799.6,406.2 801.5,433.2 803.0,447.6 804.1,436.6 804.9,465.9 806.7,399.1 808.3,399.1 809.3,479.0 810.9,479.0 811.9,438.4 813.5,438.4 814.6,479.0 816.2,479.0 818.0,400.4 819.8,406.2 821.4,479.0 822.7,479.0 824.0,438.4 825.8,473.7 827.1,473.7 829.2,405.2 830.5,405.2 831.8,473.7 833.7,473.7 835.5,433.2 837.1,479.0 838.1,400.4 840.2,400.4 841.5,479.0 842.8,433.2 844.1,433.2 845.4,479.0 846.8,479.0 848.6,338.1 850.2,338.1 852.0,479.0 853.0,479.0 854.1,438.4 855.4,438.4 856.4,479.0 858.0,473.7 859.8,401.0 861.7,404.4 863.2,473.7 865.1,400.4 866.9,400.4 868.5,473.7 869.8,473.7 871.1,438.4 872.7,438.4 874.2,479.0 875.5,407.0 877.4,401.8 879.0,479.0 880.5,479.0 881.9,433.2 883.7,433.2 885.0,448.9 885.8,400.4 887.1,430.6 888.4,479.0 889.7,462.7 891.0,462.7 892.4,420.1 893.7,425.3 895.0,460.7 896.3,409.6 898.1,409.6 899.7,445.0 901.0,432.4 902.3,450.2 903.6,477.7 903.6,498.5" fill="#b9ecb9"/>
<polygon points="404.0,498.5 404.0,498.5 430.9,498.5 430.9,498.5" fill="#c4c4fa"/>
<polygon points="482.5,498.5 482.5,496.0 485.0,498.5 491.6,498.5 493.7,491.5 495.5,491.5 496.9,498.5 498.4,475.0 500.2,476.4 501.8,498.5 648.1,498.5 649.7,484.7 651.5,484.7 652.8,498.5 660.7,498.5 662.0,497.3 663.8,497.3 665.4,498.5 903.6,498.5 903.6,498.5" fill="#c4c4fa"/>
<line x1="405.5" y1="341.5" x2="904.5" y2="341.5" stroke="rgba(222,79,79,0.45)" stroke-width="1" stroke-dasharray="1,1" shape-rendering="crispEdges"/>
<line x1="402.0" y1="341.5" x2="404.5" y2="341.5" stroke="rgba(222,79,79,0.45)" stroke-width="1"/>
<line x1="904.5" y1="341.5" x2="906.5" y2="341.5" stroke="rgba(222,79,79,0.45)" stroke-width="1"/>
<line x1="405.5" y1="357.5" x2="904.5" y2="357.5" stroke="rgba(140,140,140,0.45)" stroke-width="1" stroke-dasharray="1,1" shape-rendering="crispEdges"/>
<line x1="402.0" y1="357.5" x2="404.5" y2="357.5" stroke="rgba(140,140,140,0.45)" stroke-width="1"/>
<line x1="904.5" y1="357.5" x2="906.5" y2="357.5" stroke="rgba(140,140,140,0.45)" stroke-width="1"/>
<line x1="405.5" y1="372.5" x2="904.5" y2="372.5" stroke="rgba(222,79,79,0.45)" stroke-width="1" stroke-dasharray="1,1" shape-rendering="crispEdges"/>
<line x1="402.0" y1="372.5" x2="404.5" y2="372.5" stroke="rgba(222,79,79,0.45)" stroke-width="1"/>
<line x1="904.5" y1="372.5" x2="906.5" y2="372.5" stroke="rgba(222,79,79,0.45)" stroke-width="1"/>
<line x1="405.5" y1="388.5" x2="904.5" y2="388.5" stroke="rgba(140,140,140,0.45)" stroke-width="1" stroke-dasharray="1,1" shape-rendering="crispEdges"/>
<line x1="402.0" y1="388.5" x2="404.5" y2="388.5" stroke="rgba(140,140,140,0.45)" stroke-width="1"/>
<line x1="904.5" y1="388.5" x2="906.5" y2="388.5" stroke="rgba(140,140,140,0.45)" stroke-width="1"/>
<line x1="405.5" y1="404.5" x2="904.5" y2="404.5" stroke="rgba(222,79,79,0.45)" stroke-width="1" stroke-dasharray="1,1" shape-rendering="crispEdges"/>
<line x1="402.0" y1="404.5" x2="404.5" y2="404.5" stroke="rgba(222,79,79,0.45)" stroke-width="1"/>
<line x1="904.5" y1="404.5" x2="906.5" y2="404.5" stroke="rgba(222,79,79,0.45)" stroke-width="1"/>
<line x1="405.5" y1="420.5" x2="904.5" y2="420.5" stroke="rgba(140,140,140,0.45)" stroke-width="1" stroke-dasharray="1,1" shape-rendering="crispEdges"/>
<line x1="402.0" y1="420.5" x2="404.5" y2="420.5" stroke="rgba(140,140,140,0.45)" stroke-width="1"/>
<line x1="904.5" y1="420.5" x2="906.5" y2="420.5" stroke="rgba(140,140,140,0.45)" stroke-width="1"/>
<line x1="405.5" y1="435.5" x2="904.5" y2="435.5" stroke="rgba(222,79,79,0.45)" stroke-width="1" stroke-dasharray="1,1" shape-rendering="crispEdges"/>
<line x1="402.0" y1="435.5" x2="404.5" y2="435.5" stroke="rgba(222,79,79,0.45)" stroke-width="1"/>
<line x1="904.5" y1="435.5" x2="906.5" y2="435.5" stroke="rgba(222,79,79,0.45)" stroke-width="1"/>
<line x1="405.5" y1="451.5" x2="904.5" y2="451.5" stroke="rgba(140,140,140,0.45)" stroke-width="1" stroke-dasharray="1,1" shape-rendering="crispEdges"/>
<line x1="402.0" y1="451.5" x2="404.5" y2="451.5" stroke="rgba(140,140,140,0.45)" stroke-width="1"/>
<line x1="904.5" y1="451.5" x2="906.5" y2="451.5" stroke="rgba(140,140,140,0.45)" stroke-width="1"/>
<line x1="405.5" y1="467.5" x2="904.5" y2="467.5" stroke="rgba(222,79,79,0.45)" stroke-width="1" stroke-dasharray="1,1" shape-rendering="crispEdges"/>
<line x1="402.0" y1="467.5" x2="404.5" y2="467.5" stroke="rgba(222,79,79,0.45)" stroke-width="1"/>
<line x1="904.5" y1="467.5" x2="906.5" y2="467.5" stroke="rgba(222,79,79,0.45)" stroke-width="1"/>
<line x1="405.5" y1="482.5" x2="904.5" y2="482.5" stroke="rgba(140,140,140,0.45)" stroke-width="1" stroke-dasharray="1,1" shape-rendering="crispEdges"/>
<line x1="402.0" y1="482.5" x2="404.5" y2="482.5" stroke="rgba(140,140,140,0.45)" stroke-width="1"/>
<line x1="904.5" y1="482.5" x2="906.5" y2="482.5" stroke="rgba(140,140,140,0.45)" stroke-width="1"/>
<line x1="420.5" y1="338.5" x2="420.5" y2="498.5" stroke="rgba(140,140,140,0.45)" stroke-width="1" stroke-dasharray="1,1" stroke-dashoffset="1" shape-rendering="crispEdges"/>
<line x1="420.5" y1="336.5" x2="420.5" y2="338.5" stroke="rgba(140,140,140,0.45)" stroke-width="1"/>
<line x1="420.5" y1="498.5" x2="420.5" y2="500.5" stroke="rgba(140,140,140,0.45)" stroke-width="1"/>
<line x1="437.5" y1="338.5" x2="437.5" y2="498.5" stroke="rgba(140,140,140,0.45)" stroke-width="1" stroke-dasharray="1,1" stroke-dashoffset="1" shape-rendering="crispEdges"/>
<line x1="437.5" y1="336.5" x2="437.5" y2="338.5" stroke="rgba(140,140,140,0.45)" stroke-width="1"/>
<line x1="437.5" y1="498.5" x2="437.5" y2="500.5" stroke="rgba(140,140,140,0.45)" stroke-width="1"/>
<line x1="454.5" y1="338.5" x2="454.5" y2="498.5" stroke="rgba(222,79,79,0.45)" stroke-width="1" stroke-dasharray="1,1" stroke-dashoffset="1" shape-rendering="crispEdges"/>
<line x1="454.5" y1="336.5" x2="454.5" y2="338.5" stroke="rgba(222,79,79,0.45)" stroke-width="1"/>
<line x1="454.5" y1="498.5" x2="454.5" y2="501.5" stroke="rgba(222,79,79,0.45)" stroke-width="1"/>
<line x1="470.5" y1="338.5" x2="470.5" y2="498.5" stroke="rgba(140,140,140,0.45)" stroke-width="1" stroke-dasharray="1,1" stroke-dashoffset="1" shape-rendering="crispEdges"/>
<line x1="470.5" y1="336.5" x2="470.5" y2="338.5" stroke="rgba(140,140,140,0.45)" stroke-width="1"/>
<line x1="470.5" y1="498.5" x2="470.5" y2="500.5" stroke="rgba(140,140,140,0.45)" stroke-width="1"/>
<line x1="487.5" y1="338.5" x2="487.5" y2="498.5" stroke="rgba(140,140,140,0.45)" stroke-width="1" stroke-dasharray="1,1" stroke-dashoffset="1" shape-rendering="crispEdges"/>
<line x1="487.5" y1="336.5" x2="487.5" y2="338.5" stroke="rgba(140,140,140,0.45)" stroke-width="1"/>
<line x1="487.5" y1="498.5" x2="487.5" y2="500.5" stroke="rgba(140,140,140,0.45)" stroke-width="1"/>
<line x1="504.5" y1="338.5" x2="504.5" y2="498.5" stroke="rgba(140,140,140,0.45)" stroke-width="1" stroke-dasharray="1,1" stroke-dashoffset="1" shape-rendering="crispEdges"/>
<line x1="504.5" y1="336.5" x2="504.5" y2="338.5" stroke="rgba(140,140,140,0.45)" stroke-width="1"/>
<line x1="504.5" y1="498.5" x2="504.5" y2="500.5" stroke="rgba(140,140,140,0.45)" stroke-width="1"/>
<line x1="520.5" y1="338.5" x2="520.5" y2="498.5" stroke="rgba(140,140,140,0.45)" stroke-width="1" stroke-dasharray="1,1" stroke-dashoffset="1" shape-rendering="crispEdges"/>
<line x1="520.5" y1="336.5" x2="520.5" y2="338.5" stroke="rgba(140,140,140,0.45)" stroke-width="1"/>
<line x1="520.5" y1="498.5" x2="520.5" y2="500.5" stroke="rgba(140,140,140,0.45)" stroke-width="1"/>
<line x1="537.5" y1="338.5" x2="537.5" y2="498.5" stroke="rgba(222,79,79,0.45)" stroke-width="1" stroke-dasharray="1,1" stroke-dashoffset="1" shape-rendering="crispEdges"/>
<line x1="537.5" y1="336.5" x2="537.5" y2="338.5" stroke="rgba(222,79,79,0.45)" stroke-width="1"/>
<line x1="537.5" y1="498.5" x2="537.5" y2="501.5" stroke="rgba(222,79,79,0.45)" stroke-width="1"/>
<line x1="554.5" y1="338.5" x2="554.5" y2="498.5" stroke="rgba(140,140,140,0.45)" stroke-width="1" stroke-dasharray="1,1" stroke-dashoffset="1" shape-rendering="crispEdges"/>
<line x1="554.5" y1="336.5" x2="554.5" y2="338.5" stroke="rgba(140,140,140,0.45)" stroke-width="1"/>
<line x1="554.5" y1="498.5" x2="554.5" y2="500.5" stroke="rgba(140,140,140,0.45)" stroke-width="1"/>
<line x1="570.5" y1="338.5" x2="570.5" y2="498.5" stroke="rgba(140,140,140,0.45)" stroke-width="1" stroke-dasharray="1,1" stroke-dashoffset="1" shape-rendering="crispEdges"/>
<line x1="570.5" y1="336.5" x2="570.5" y2="338.5" stroke="rgba(140,140,140,0.45)" stroke-width="1"/>
<line x1="570.5" y1="498.5" x2="570.5" y2="500.5" stroke="rgba(140,140,140,0.45)" stroke-width="1"/>
<line x1="587.5" y1="338.5" x2="587.5" y2="498.5" stroke="rgba(140,140,140,0.45)" stroke-width="1" stroke-dasharray="1,1" stroke-dashoffset="1" shape-rendering="crispEdges"/>
<line x1="587.5" y1="336.5" x2="587.5" y2="338.5" stroke="rgba(140,140,140,0.45)" stroke-width="1"/>
<line x1="587.5" y1="498.5" x2="587.5" y2="500.5" stroke="rgba(140,140,140,0.45)" stroke-width="1"/>
<line x1="604.5" y1="338.5" x2="604.5" y2="498.5" stroke="rgba(140,140,140,0.45)" stroke-width="1" stroke-dasharray="1,1" stroke-dashoffset="1" shape-rendering="crispEdges"/>
<line x1="604.5" y1="336.5" x2="604.5" y2="338.5" stroke="rgba(140,140,140,0.45)" stroke-width="1"/>
<line x1="604.5" y1="498.5" x2="604.5" y2="500.5" stroke="rgba(140,140,140,0.45)" stroke-width="1"/>
<line x1="620.5" y1="338.5" x2="620.5" y2="498.5" stroke="rgba(222,79,79,0.45)" stroke-width="1" stroke-dasharray="1,1" stroke-dashoffset="1" shape-rendering="crispEdges"/>
<line x1="620.5" y1="336.5" x2="620.5" y2="338.5" stroke="rgba(222,79,79,0.45)" stroke-width="1"/>
<line x1="620.5" y1="498.5" x2="620.5" y2="501.5" stroke="rgba(222,79,79,0.45)" stroke-width="1"/>
<line x1="637.5" y1="338.5" x2="637.5" y2="498.5" stroke="rgba(140,140,140,0.45)" stroke-width="1" stroke-dasharray="1,1" stroke-dashoffset="1" shape-rendering="crispEdges"/>
<line x1="637.5" y1="336.5" x2="637.5" y2="338.5" stroke="rgba(140,140,140,0.45)" stroke-width="1"/>
<line x1="637.5" y1="498.5" x2="637.5" y2="500.5" stroke="rgba(140,140,140,0.45)" stroke-width="1"/>
<line x1="654.5" y1="338.5" x2="654.5" y2="498.5" stroke="rgba(140,140,140,0.45)" stroke-width="1" stroke-dasharray="1,1" stroke-dashoffset="1" shape-rendering="crispEdges"/>
<line x1="654.5" y1="336.5" x2="654.5" y2="338.5" stroke="rgba(140,140,140,0.45)" stroke-width="1"/>
<line x1="654.5" y1="498.5" x2="654.5" y2="500.5" stroke="rgba(140,140,140,0.45)" stroke-width="1"/>
<line x1="670.5" y1="338.5" x2="670.5" y2="498.5" stroke="rgba(140,140,140,0.45)" stroke-width="1" stroke-dasharray="1,1" stroke-dashoffset="1" shape-rendering="crispEdges"/>
<line x1="670.5" y1="336.5" x2="670.5" y2="338.5" stroke="rgba(140,140,140,0.45)" stroke-width="1"/>
<line x1="670.5" y1="498.5" x2="670.5" y2="500.5" stroke="rgba(140,140,140,0.45)" stroke-width="1"/>
<line x1="687.5" y1="338.5" x2="687.5" y2="498.5" stroke="rgba(140,140,140,0.45)" stroke-width="1" stroke-dasharray="1,1" stroke-dashoffset="1" shape-rendering="crispEdges"/>
<line x1="687.5" y1="336.5" x2="687.5" y2="338.5" stroke="rgba(140,140,140,0.45)" stroke-width="1"/>
<line x1="687.5" y1="498.5" x2="687.5" y2="500.5" stroke="rgba(140,140,140,0.45)" stroke-width="1"/>
<line x1="704.5" y1="338.5" x2="704.5" y2="498.5" stroke="rgba(222,79,79,0.45)" stroke-width="1" stroke-dasharray="1,1" stroke-dashoffset="1" shape-rendering="crispEdges"/>
<line x1="704.5" y1="336.5" x2="704.5" y2="338.5" stroke="rgba(222,79,79,0.45)" stroke-width="1"/>
<line x1="704.5" y1="498.5" x2="704.5" y2="501.5" stroke="rgba(222,79,79,0.45)" stroke-width="1"/>
<line x1="720.5" y1="338.5" x2="720.5" y2="498.5" stroke="rgba(140,140,140,0.45)" stroke-width="1" stroke-dasharray="1,1" stroke-dashoffset="1" shape-rendering="crispEdges"/>
<line x1="720.5" y1="336.5" x2="720.5" y2="338.5" stroke="rgba(140,140,140,0.45)" stroke-width="1"/>
<line x1="720.5" y1="498.5" x2="720.5" y2="500.5" stroke="rgba(140,140,140,0.45)" stroke-width="1"/>
<line x1="737.5" y1="338.5" x2="737.5" y2="498.5" stroke="rgba(140,140,140,0.45)" stroke-width="1" stroke-dasharray="1,1" stroke-dashoffset="1" shape-rendering="crispEdges"/>
<line x1="737.5" y1="336.5" x2="737.5" y2="338.5" stroke="rgba(140,140,140,0.45)" stroke-width="1"/>
<line x1="737.5" y1="498.5" x2="737.5" y2="500.5" stroke="rgba(140,140,140,0.45)" stroke-width="1"/>
<line x1="754.5" y1="338.5" x2="754.5" y2="498.5" stroke="rgba(140,140,140,0.45)" stroke-width="1" stroke-dasharray="1,1" stroke-dashoffset="1" shape-rendering="crispEdges"/>
<line x1="754.5" y1="336.5" x2="754.5" y2="338.5" stroke="rgba(140,140,140,0.45)" stroke-width="1"/>
<line x1="754.5" y1="498.5" x2="754.5" y2="500.5" stroke="rgba(140,140,140,0.45)" stroke-width="1"/>
<line x1="770.5" y1="338.5" x2="770.5" y2="498.5" stroke="rgba(140,140,140,0.45)" stroke-width="1" stroke-dasharray="1,1" stroke-dashoffset="1" shape-rendering="crispEdges"/>
<line x1="770.5" y1="336.5" x2="770.5" y2="338.5" stroke="rgba(140,140,140,0.45)" stroke-width="1"/>
<line x1="770.5" y1="498.5" x2="770.5" y2="500.5" stroke="rgba(140,140,140,0.45)" stroke-width="1"/>
<line x1="787.5" y1="338.5" x2="787.5" y2="498.5" stroke="rgba(222,79,79,0.45)" stroke-width="1" stroke-dasharray="1,1" stroke-dashoffset="1" shape-rendering="crispEdges"/>
<line x1="787.5" y1="336.5" x2="787.5" y2="338.5" stroke="rgba(222,79,79,0.45)" stroke-width="1"/>
<line x1="787.5" y1="498.5" x2="787.5" y2="501.5" stroke="rgba(222,79,79,0.45)" stroke-width="1"/>
<line x1="804.5" y1="338.5" x2="804.5" y2="498.5" stroke="rgba(140,140,140,0.45)" stroke-width="1" stroke-dasharray="1,1" stroke-dashoffset="1" shape-rendering="crispEdges"/>
<line x1="804.5" y1="336.5" x2="804.5" y2="338.5" stroke="rgba(140,140,140,0.45)" stroke-width="1"/>
<line x1="804.5" y1="498.5" x2="804.5" y2="500.5" stroke="rgba(140,140,140,0.45)" stroke-width="1"/>
<line x1="820.5" y1="338.5" x2="820.5" y2="498.5" stroke="rgba(140,140,140,0.45)" stroke-width="1" stroke-dasharray="1,1" stroke-dashoffset="1" shape-rendering="crispEdges"/>
<line x1="820.5" y1="336.5" x2="820.5" y2="338.5" stroke="rgba(140,140,140,0.45)" stroke-width="1"/>
<line x1="820.5" y1="498.5" x2="820.5" y2="500.5" stroke="rgba(140,140,140,0.45)" stroke-width="1"/>
<line x1="837.5" y1="338.5" x2="837.5" y2="498.5" stroke="rgba(140,140,140,0.45)" stroke-width="1" stroke-dasharray="1,1" stroke-dashoffset="1" shape-rendering="crispEdges"/>
<line x1="837.5" y1="336.5" x2="837.5" y2="338.5" stroke="rgba(140,140,140,0.45)" stroke-width="1"/>
<line x1="837.5" y1="498.5" x2="837.5" y2="500.5" stroke="rgba(140,140,140,0.45)" stroke-width="1"/>
<line x1="854.5" y1="338.5" x2="854.5" y2="498.5" stroke="rgba(140,140,140,0.45)" stroke-width="1" stroke-dasharray="1,1" stroke-dashoffset="1" shape-rendering="crispEdges"/>
<line x1="854.5" y1="336.5" x2="854.5" y2="338.5" stroke="rgba(140,140,140,0.45)" stroke-width="1"/>
<line x1="854.5" y1="498.5" x2="854.5" y2="500.5" stroke="rgba(140,140,140,0.45)" stroke-width="1"/>
<line x1="870.5" y1="338.5" x2="870.5" y2="498.5" stroke="rgba(222,79,79,0.45)" stroke-width="1" stroke-dasharray="1,1" stroke-dashoffset="1" shape-rendering="crispEdges"/>
<line x1="870.5" y1="336.5" x2="870.5" y2="338.5" stroke="rgba(222,79,79,0.45)" stroke-width="1"/>
<line x1="870.5" y1="498.5" x2="870.5" y2="501.5" stroke="rgba(222,79,79,0.45)" stroke-width="1"/>
<line x1="887.5" y1="338.5" x2="887.5" y2="498.5" stroke="rgba(140,140,140,0.45)" stroke-width="1" stroke-dasharray="1,1" stroke-dashoffset="1" shape-rendering="crispEdges"/>
<line x1="887.5" y1="336.5" x2="887.5" y2="338.5" stroke="rgba(140,140,140,0.45)" stroke-width="1"/>
<line x1="887.5" y1="498.5" x2="887.5" y2="500.5" stroke="rgba(140,140,140,0.45)" stroke-width="1"/>
<line x1="400.5" y1="498.5" x2="908.5" y2="498.5" stroke="#222" stroke-width="1"/>
<line x1="404.5" y1="502.5" x2="404.5" y2="334.5" stroke="#4a4a4a" stroke-width="1"/>
<polygon points="906.5,495.5 906.5,501.5 911.5,498.5" fill="#801f1f"/>
<polygon points="401.5,336.5 407.5,336.5 404.5,331.5" fill="#801f1f"/>
<polyline points="404.7,431.3 407.3,479.0 408.6,479.0 410.5,397.3 412.3,431.3 413.0,431.8 414.4,479.0 416.2,435.8 418.3,476.4 419.6,476.4 421.5,405.2 423.0,405.7 424.9,479.0 426.2,465.9 428.3,408.3 430.1,471.1 430.9,471.1" fill="none" stroke="#00d000" stroke-width="1.25" stroke-linejoin="miter" stroke-miterlimit="3"/>
<polyline points="482.5,478.5 484.3,478.5 486.9,401.0 489.0,433.2 494.2,433.2 495.5,477.7 497.1,477.7 498.7,370.3 499.7,370.3 501.3,477.7 503.4,433.2 505.5,435.8 506.8,472.4 508.1,472.4 509.4,400.4 511.2,408.3 512.8,471.1 513.8,471.1 514.9,407.0 516.5,407.5 518.0,477.7 520.4,435.8 522.0,442.3 523.8,479.0 525.9,400.4 527.7,401.5 529.0,479.0 531.1,433.2 533.0,434.5 534.3,479.0 536.4,366.4 537.7,367.7 539.0,447.6 540.3,447.6 541.6,431.9 543.4,479.0 546.6,405.2 547.9,413.5 550.0,473.7 552.1,438.4 553.9,473.7 555.7,451.5 557.8,405.2 559.9,452.8 561.8,473.7 563.6,421.4 565.2,451.5 567.0,452.8 568.8,384.7 570.4,387.4 571.7,477.7 573.0,477.7 574.8,400.4 576.7,451.5 578.2,473.7 580.1,432.4 581.9,471.1 583.5,451.5 585.3,405.2 587.1,452.8 588.7,471.1 590.5,446.3 591.3,438.4 593.1,471.1 596.5,405.2 599.2,473.7 600.5,452.8 602.6,421.4 604.4,479.0 606.2,437.1 607.8,417.5 608.8,417.5 610.4,479.0 611.5,424.0 613.6,400.4 615.4,452.8 617.0,471.1 618.8,438.4 620.1,473.7 621.4,473.7 624.0,405.2 626.1,447.6 627.2,479.0 629.3,437.1 631.4,458.0 633.2,394.7 634.5,394.7 635.8,447.6 636.6,399.9 638.4,399.9 639.7,479.0 641.0,479.0 642.9,399.1 644.5,403.6 646.3,431.9 647.6,431.9 649.7,479.0 650.7,429.2 652.8,403.6 654.1,426.6 656.0,445.0 657.5,477.7 660.2,420.1 662.0,479.0 663.8,410.9 665.4,410.9 666.4,471.1 668.5,432.4 669.8,433.2 671.7,442.3 673.8,400.4 675.1,479.0 676.4,479.0 678.5,438.4 680.3,455.4 681.6,458.0 682.9,479.0 684.8,405.7 686.3,479.0 687.1,477.7 689.7,420.1 692.3,472.4 693.4,448.9 695.5,425.3 696.8,454.1 698.1,472.4 700.7,400.4 702.0,400.4 703.8,479.0 704.9,447.6 707.3,403.6 709.1,404.4 711.2,479.0 712.5,479.0 715.1,410.4 717.7,473.7 719.0,422.7 720.3,406.2 722.2,458.0 723.7,433.2 724.8,433.2 726.4,479.0 729.0,400.4 730.8,406.2 732.1,433.2 735.3,433.2 736.8,479.0 740.0,400.4 742.6,437.6 744.0,438.4 745.2,448.9 746.5,432.4 749.1,479.0 752.5,399.1 755.2,473.7 757.8,425.3 760.4,413.5 762.2,447.6 763.5,473.7 764.8,460.7 766.7,437.1 768.8,401.8 771.4,446.3 773.5,431.9 775.3,479.0 778.7,369.0 779.8,446.3 781.9,432.4 784.0,432.4 784.7,450.2 786.5,431.9 788.4,400.4 789.9,431.9 791.8,479.0 793.6,432.4 794.4,432.4 797.0,473.7 799.6,406.2 801.5,433.2 803.0,447.6 804.1,436.6 804.9,465.9 806.7,399.1 808.3,399.1 809.3,479.0 810.9,479.0 811.9,438.4 813.5,438.4 814.6,479.0 816.2,479.0 818.0,400.4 819.8,406.2 821.4,479.0 822.7,479.0 824.0,438.4 825.8,473.7 827.1,473.7 829.2,405.2 830.5,405.2 831.8,473.7 833.7,473.7 835.5,433.2 837.1,479.0 838.1,400.4 840.2,400.4 841.5,479.0 842.8,433.2 844.1,433.2 845.4,479.0 846.8,479.0 848.6,338.1 850.2,338.1 852.0,479.0 853.0,479.0 854.1,438.4 855.4,438.4 856.4,479.0 858.0,473.7 859.8,401.0 861.7,404.4 863.2,473.7 865.1,400.4 866.9,400.4 868.5,473.7 869.8,473.7 871.1,438.4 872.7,438.4 874.2,479.0 875.5,407.0 877.4,401.8 879.0,479.0 880.5,479.0 881.9,433.2 883.7,433.2 885.0,448.9 885.8,400.4 887.1,430.6 888.4,479.0 889.7,462.7 891.0,462.7 892.4,420.1 893.7,425.3 895.0,460.7 896.3,409.6 898.1,409.6 899.7,445.0 901.0,432.4 902.3,450.2 903.6,477.7" fill="none" stroke="#00d000" stroke-width="1.25" stroke-linejoin="miter" stroke-miterlimit="3"/>
<polyline points="404.0,498.5 430.9,498.5" fill="none" stroke="#0000ff" stroke-width="1.1" stroke-opacity="0.85" stroke-linejoin="miter" stroke-miterlimit="3"/>
<polyline points="482.5,496.0 485.0,498.5 491.6,498.5 493.7,491.5 495.5,491.5 496.9,498.5 498.4,475.0 500.2,476.4 501.8,498.5 648.1,498.5 649.7,484.7 651.5,484.7 652.8,498.5 660.7,498.5 662.0,497.3 663.8,497.3 665.4,498.5 903.6,498.5" fill="none" stroke="#0000ff" stroke-width="1.1" stroke-opacity="0.85" stroke-linejoin="miter" stroke-miterlimit="3"/>
<line x1="400.5" y1="498.5" x2="908.5" y2="498.5" stroke="#222" stroke-opacity="0.5" stroke-width="1"/>
<text transform="translate(397.4,346.2) scale(1,1.1)" font-family="'Liberation Mono', monospace" font-size="11.9" text-anchor="end" fill="#000" stroke="#000" stroke-width="0.08">100</text>
<text transform="translate(397.4,377.6) scale(1,1.1)" font-family="'Liberation Mono', monospace" font-size="11.9" text-anchor="end" fill="#000" stroke="#000" stroke-width="0.08">80</text>
<text transform="translate(397.4,409.0) scale(1,1.1)" font-family="'Liberation Mono', monospace" font-size="11.9" text-anchor="end" fill="#000" stroke="#000" stroke-width="0.08">60</text>
<text transform="translate(397.4,440.40000000000003) scale(1,1.1)" font-family="'Liberation Mono', monospace" font-size="11.9" text-anchor="end" fill="#000" stroke="#000" stroke-width="0.08">40</text>
<text transform="translate(397.4,471.8) scale(1,1.1)" font-family="'Liberation Mono', monospace" font-size="11.9" text-anchor="end" fill="#000" stroke="#000" stroke-width="0.08">20</text>
<text transform="translate(397.4,503.2) scale(1,1.1)" font-family="'Liberation Mono', monospace" font-size="11.9" text-anchor="end" fill="#000" stroke="#000" stroke-width="0.08">0</text>
<text transform="translate(455.8,512.6) scale(1,1.1)" font-family="'Liberation Mono', monospace" font-size="11.9" text-anchor="middle" fill="#000" stroke="#000" stroke-width="0.08">20:10</text>
<text transform="translate(539.1,512.6) scale(1,1.1)" font-family="'Liberation Mono', monospace" font-size="11.9" text-anchor="middle" fill="#000" stroke="#000" stroke-width="0.08">20:20</text>
<text transform="translate(622.4,512.6) scale(1,1.1)" font-family="'Liberation Mono', monospace" font-size="11.9" text-anchor="middle" fill="#000" stroke="#000" stroke-width="0.08">20:30</text>
<text transform="translate(705.7,512.6) scale(1,1.1)" font-family="'Liberation Mono', monospace" font-size="11.9" text-anchor="middle" fill="#000" stroke="#000" stroke-width="0.08">20:40</text>
<text transform="translate(789.0,512.6) scale(1,1.1)" font-family="'Liberation Mono', monospace" font-size="11.9" text-anchor="middle" fill="#000" stroke="#000" stroke-width="0.08">20:50</text>
<text transform="translate(872.3,512.6) scale(1,1.1)" font-family="'Liberation Mono', monospace" font-size="11.9" text-anchor="middle" fill="#000" stroke="#000" stroke-width="0.08">21:00</text>
<rect x="347.5" y="522.5" width="8" height="8.5" fill="#00dd00" stroke="#000" stroke-width="1"/>
<rect x="347.5" y="536.5" width="8" height="8.5" fill="#0000ff" stroke="#000" stroke-width="1"/>
<text transform="translate(362.4,530.6) scale(1,1.1)" font-family="'Liberation Mono', monospace" font-size="11.86" fill="#000" stroke="#000" stroke-width="0.08" xml:space="preserve">Written   35.73 Avg,  101.95 Max,   49.25 Last</text>
<text transform="translate(362.4,544.9) scale(1,1.1)" font-family="'Liberation Mono', monospace" font-size="11.86" fill="#000" stroke="#000" stroke-width="0.08" xml:space="preserve">Read       0.20 Avg,   15.05 Max,    0.00 Last</text>
<text transform="translate(633,579) scale(1,1.1)" font-family="'Liberation Mono', monospace" font-size="13.3" text-anchor="middle" fill="#000" stroke="#000" stroke-width="0.08">dm-0/disk_time</text>
<text transform="translate(347.2,675.4) rotate(-90) scale(1,1.1)" x="0" y="0" font-family="'Liberation Mono', monospace" font-size="11.9" text-anchor="middle" fill="#000" stroke="#000" stroke-width="0.08">Seconds</text>
<text transform="translate(929.5,565.8) rotate(90)" x="0" y="6.2" font-family="'Liberation Mono', monospace" font-size="8.35" fill="#a8a8a8">RRDTOOL / TOBI OETIKER</text>
<line x1="420.5" y1="596.5" x2="420.5" y2="756.5" stroke="rgba(140,140,140,0.45)" stroke-width="1" stroke-dasharray="1,1" stroke-dashoffset="1" shape-rendering="crispEdges"/>
<line x1="420.5" y1="594.5" x2="420.5" y2="596.5" stroke="rgba(140,140,140,0.45)" stroke-width="1"/>
<line x1="420.5" y1="756.5" x2="420.5" y2="758.5" stroke="rgba(140,140,140,0.45)" stroke-width="1"/>
<line x1="437.5" y1="596.5" x2="437.5" y2="756.5" stroke="rgba(140,140,140,0.45)" stroke-width="1" stroke-dasharray="1,1" stroke-dashoffset="1" shape-rendering="crispEdges"/>
<line x1="437.5" y1="594.5" x2="437.5" y2="596.5" stroke="rgba(140,140,140,0.45)" stroke-width="1"/>
<line x1="437.5" y1="756.5" x2="437.5" y2="758.5" stroke="rgba(140,140,140,0.45)" stroke-width="1"/>
<line x1="454.5" y1="596.5" x2="454.5" y2="756.5" stroke="rgba(222,79,79,0.45)" stroke-width="1" stroke-dasharray="1,1" stroke-dashoffset="1" shape-rendering="crispEdges"/>
<line x1="454.5" y1="594.5" x2="454.5" y2="596.5" stroke="rgba(222,79,79,0.45)" stroke-width="1"/>
<line x1="454.5" y1="756.5" x2="454.5" y2="759.5" stroke="rgba(222,79,79,0.45)" stroke-width="1"/>
<line x1="470.5" y1="596.5" x2="470.5" y2="756.5" stroke="rgba(140,140,140,0.45)" stroke-width="1" stroke-dasharray="1,1" stroke-dashoffset="1" shape-rendering="crispEdges"/>
<line x1="470.5" y1="594.5" x2="470.5" y2="596.5" stroke="rgba(140,140,140,0.45)" stroke-width="1"/>
<line x1="470.5" y1="756.5" x2="470.5" y2="758.5" stroke="rgba(140,140,140,0.45)" stroke-width="1"/>
<line x1="487.5" y1="596.5" x2="487.5" y2="756.5" stroke="rgba(140,140,140,0.45)" stroke-width="1" stroke-dasharray="1,1" stroke-dashoffset="1" shape-rendering="crispEdges"/>
<line x1="487.5" y1="594.5" x2="487.5" y2="596.5" stroke="rgba(140,140,140,0.45)" stroke-width="1"/>
<line x1="487.5" y1="756.5" x2="487.5" y2="758.5" stroke="rgba(140,140,140,0.45)" stroke-width="1"/>
<line x1="504.5" y1="596.5" x2="504.5" y2="756.5" stroke="rgba(140,140,140,0.45)" stroke-width="1" stroke-dasharray="1,1" stroke-dashoffset="1" shape-rendering="crispEdges"/>
<line x1="504.5" y1="594.5" x2="504.5" y2="596.5" stroke="rgba(140,140,140,0.45)" stroke-width="1"/>
<line x1="504.5" y1="756.5" x2="504.5" y2="758.5" stroke="rgba(140,140,140,0.45)" stroke-width="1"/>
<line x1="520.5" y1="596.5" x2="520.5" y2="756.5" stroke="rgba(140,140,140,0.45)" stroke-width="1" stroke-dasharray="1,1" stroke-dashoffset="1" shape-rendering="crispEdges"/>
<line x1="520.5" y1="594.5" x2="520.5" y2="596.5" stroke="rgba(140,140,140,0.45)" stroke-width="1"/>
<line x1="520.5" y1="756.5" x2="520.5" y2="758.5" stroke="rgba(140,140,140,0.45)" stroke-width="1"/>
<line x1="537.5" y1="596.5" x2="537.5" y2="756.5" stroke="rgba(222,79,79,0.45)" stroke-width="1" stroke-dasharray="1,1" stroke-dashoffset="1" shape-rendering="crispEdges"/>
<line x1="537.5" y1="594.5" x2="537.5" y2="596.5" stroke="rgba(222,79,79,0.45)" stroke-width="1"/>
<line x1="537.5" y1="756.5" x2="537.5" y2="759.5" stroke="rgba(222,79,79,0.45)" stroke-width="1"/>
<line x1="554.5" y1="596.5" x2="554.5" y2="756.5" stroke="rgba(140,140,140,0.45)" stroke-width="1" stroke-dasharray="1,1" stroke-dashoffset="1" shape-rendering="crispEdges"/>
<line x1="554.5" y1="594.5" x2="554.5" y2="596.5" stroke="rgba(140,140,140,0.45)" stroke-width="1"/>
<line x1="554.5" y1="756.5" x2="554.5" y2="758.5" stroke="rgba(140,140,140,0.45)" stroke-width="1"/>
<line x1="570.5" y1="596.5" x2="570.5" y2="756.5" stroke="rgba(140,140,140,0.45)" stroke-width="1" stroke-dasharray="1,1" stroke-dashoffset="1" shape-rendering="crispEdges"/>
<line x1="570.5" y1="594.5" x2="570.5" y2="596.5" stroke="rgba(140,140,140,0.45)" stroke-width="1"/>
<line x1="570.5" y1="756.5" x2="570.5" y2="758.5" stroke="rgba(140,140,140,0.45)" stroke-width="1"/>
<line x1="587.5" y1="596.5" x2="587.5" y2="756.5" stroke="rgba(140,140,140,0.45)" stroke-width="1" stroke-dasharray="1,1" stroke-dashoffset="1" shape-rendering="crispEdges"/>
<line x1="587.5" y1="594.5" x2="587.5" y2="596.5" stroke="rgba(140,140,140,0.45)" stroke-width="1"/>
<line x1="587.5" y1="756.5" x2="587.5" y2="758.5" stroke="rgba(140,140,140,0.45)" stroke-width="1"/>
<line x1="604.5" y1="596.5" x2="604.5" y2="756.5" stroke="rgba(140,140,140,0.45)" stroke-width="1" stroke-dasharray="1,1" stroke-dashoffset="1" shape-rendering="crispEdges"/>
<line x1="604.5" y1="594.5" x2="604.5" y2="596.5" stroke="rgba(140,140,140,0.45)" stroke-width="1"/>
<line x1="604.5" y1="756.5" x2="604.5" y2="758.5" stroke="rgba(140,140,140,0.45)" stroke-width="1"/>
<line x1="620.5" y1="596.5" x2="620.5" y2="756.5" stroke="rgba(222,79,79,0.45)" stroke-width="1" stroke-dasharray="1,1" stroke-dashoffset="1" shape-rendering="crispEdges"/>
<line x1="620.5" y1="594.5" x2="620.5" y2="596.5" stroke="rgba(222,79,79,0.45)" stroke-width="1"/>
<line x1="620.5" y1="756.5" x2="620.5" y2="759.5" stroke="rgba(222,79,79,0.45)" stroke-width="1"/>
<line x1="637.5" y1="596.5" x2="637.5" y2="756.5" stroke="rgba(140,140,140,0.45)" stroke-width="1" stroke-dasharray="1,1" stroke-dashoffset="1" shape-rendering="crispEdges"/>
<line x1="637.5" y1="594.5" x2="637.5" y2="596.5" stroke="rgba(140,140,140,0.45)" stroke-width="1"/>
<line x1="637.5" y1="756.5" x2="637.5" y2="758.5" stroke="rgba(140,140,140,0.45)" stroke-width="1"/>
<line x1="654.5" y1="596.5" x2="654.5" y2="756.5" stroke="rgba(140,140,140,0.45)" stroke-width="1" stroke-dasharray="1,1" stroke-dashoffset="1" shape-rendering="crispEdges"/>
<line x1="654.5" y1="594.5" x2="654.5" y2="596.5" stroke="rgba(140,140,140,0.45)" stroke-width="1"/>
<line x1="654.5" y1="756.5" x2="654.5" y2="758.5" stroke="rgba(140,140,140,0.45)" stroke-width="1"/>
<line x1="670.5" y1="596.5" x2="670.5" y2="756.5" stroke="rgba(140,140,140,0.45)" stroke-width="1" stroke-dasharray="1,1" stroke-dashoffset="1" shape-rendering="crispEdges"/>
<line x1="670.5" y1="594.5" x2="670.5" y2="596.5" stroke="rgba(140,140,140,0.45)" stroke-width="1"/>
<line x1="670.5" y1="756.5" x2="670.5" y2="758.5" stroke="rgba(140,140,140,0.45)" stroke-width="1"/>
<line x1="687.5" y1="596.5" x2="687.5" y2="756.5" stroke="rgba(140,140,140,0.45)" stroke-width="1" stroke-dasharray="1,1" stroke-dashoffset="1" shape-rendering="crispEdges"/>
<line x1="687.5" y1="594.5" x2="687.5" y2="596.5" stroke="rgba(140,140,140,0.45)" stroke-width="1"/>
<line x1="687.5" y1="756.5" x2="687.5" y2="758.5" stroke="rgba(140,140,140,0.45)" stroke-width="1"/>
<line x1="704.5" y1="596.5" x2="704.5" y2="756.5" stroke="rgba(222,79,79,0.45)" stroke-width="1" stroke-dasharray="1,1" stroke-dashoffset="1" shape-rendering="crispEdges"/>
<line x1="704.5" y1="594.5" x2="704.5" y2="596.5" stroke="rgba(222,79,79,0.45)" stroke-width="1"/>
<line x1="704.5" y1="756.5" x2="704.5" y2="759.5" stroke="rgba(222,79,79,0.45)" stroke-width="1"/>
<line x1="720.5" y1="596.5" x2="720.5" y2="756.5" stroke="rgba(140,140,140,0.45)" stroke-width="1" stroke-dasharray="1,1" stroke-dashoffset="1" shape-rendering="crispEdges"/>
<line x1="720.5" y1="594.5" x2="720.5" y2="596.5" stroke="rgba(140,140,140,0.45)" stroke-width="1"/>
<line x1="720.5" y1="756.5" x2="720.5" y2="758.5" stroke="rgba(140,140,140,0.45)" stroke-width="1"/>
<line x1="737.5" y1="596.5" x2="737.5" y2="756.5" stroke="rgba(140,140,140,0.45)" stroke-width="1" stroke-dasharray="1,1" stroke-dashoffset="1" shape-rendering="crispEdges"/>
<line x1="737.5" y1="594.5" x2="737.5" y2="596.5" stroke="rgba(140,140,140,0.45)" stroke-width="1"/>
<line x1="737.5" y1="756.5" x2="737.5" y2="758.5" stroke="rgba(140,140,140,0.45)" stroke-width="1"/>
<line x1="754.5" y1="596.5" x2="754.5" y2="756.5" stroke="rgba(140,140,140,0.45)" stroke-width="1" stroke-dasharray="1,1" stroke-dashoffset="1" shape-rendering="crispEdges"/>
<line x1="754.5" y1="594.5" x2="754.5" y2="596.5" stroke="rgba(140,140,140,0.45)" stroke-width="1"/>
<line x1="754.5" y1="756.5" x2="754.5" y2="758.5" stroke="rgba(140,140,140,0.45)" stroke-width="1"/>
<line x1="770.5" y1="596.5" x2="770.5" y2="756.5" stroke="rgba(140,140,140,0.45)" stroke-width="1" stroke-dasharray="1,1" stroke-dashoffset="1" shape-rendering="crispEdges"/>
<line x1="770.5" y1="594.5" x2="770.5" y2="596.5" stroke="rgba(140,140,140,0.45)" stroke-width="1"/>
<line x1="770.5" y1="756.5" x2="770.5" y2="758.5" stroke="rgba(140,140,140,0.45)" stroke-width="1"/>
<line x1="787.5" y1="596.5" x2="787.5" y2="756.5" stroke="rgba(222,79,79,0.45)" stroke-width="1" stroke-dasharray="1,1" stroke-dashoffset="1" shape-rendering="crispEdges"/>
<line x1="787.5" y1="594.5" x2="787.5" y2="596.5" stroke="rgba(222,79,79,0.45)" stroke-width="1"/>
<line x1="787.5" y1="756.5" x2="787.5" y2="759.5" stroke="rgba(222,79,79,0.45)" stroke-width="1"/>
<line x1="804.5" y1="596.5" x2="804.5" y2="756.5" stroke="rgba(140,140,140,0.45)" stroke-width="1" stroke-dasharray="1,1" stroke-dashoffset="1" shape-rendering="crispEdges"/>
<line x1="804.5" y1="594.5" x2="804.5" y2="596.5" stroke="rgba(140,140,140,0.45)" stroke-width="1"/>
<line x1="804.5" y1="756.5" x2="804.5" y2="758.5" stroke="rgba(140,140,140,0.45)" stroke-width="1"/>
<line x1="820.5" y1="596.5" x2="820.5" y2="756.5" stroke="rgba(140,140,140,0.45)" stroke-width="1" stroke-dasharray="1,1" stroke-dashoffset="1" shape-rendering="crispEdges"/>
<line x1="820.5" y1="594.5" x2="820.5" y2="596.5" stroke="rgba(140,140,140,0.45)" stroke-width="1"/>
<line x1="820.5" y1="756.5" x2="820.5" y2="758.5" stroke="rgba(140,140,140,0.45)" stroke-width="1"/>
<line x1="837.5" y1="596.5" x2="837.5" y2="756.5" stroke="rgba(140,140,140,0.45)" stroke-width="1" stroke-dasharray="1,1" stroke-dashoffset="1" shape-rendering="crispEdges"/>
<line x1="837.5" y1="594.5" x2="837.5" y2="596.5" stroke="rgba(140,140,140,0.45)" stroke-width="1"/>
<line x1="837.5" y1="756.5" x2="837.5" y2="758.5" stroke="rgba(140,140,140,0.45)" stroke-width="1"/>
<line x1="854.5" y1="596.5" x2="854.5" y2="756.5" stroke="rgba(140,140,140,0.45)" stroke-width="1" stroke-dasharray="1,1" stroke-dashoffset="1" shape-rendering="crispEdges"/>
<line x1="854.5" y1="594.5" x2="854.5" y2="596.5" stroke="rgba(140,140,140,0.45)" stroke-width="1"/>
<line x1="854.5" y1="756.5" x2="854.5" y2="758.5" stroke="rgba(140,140,140,0.45)" stroke-width="1"/>
<line x1="870.5" y1="596.5" x2="870.5" y2="756.5" stroke="rgba(222,79,79,0.45)" stroke-width="1" stroke-dasharray="1,1" stroke-dashoffset="1" shape-rendering="crispEdges"/>
<line x1="870.5" y1="594.5" x2="870.5" y2="596.5" stroke="rgba(222,79,79,0.45)" stroke-width="1"/>
<line x1="870.5" y1="756.5" x2="870.5" y2="759.5" stroke="rgba(222,79,79,0.45)" stroke-width="1"/>
<line x1="887.5" y1="596.5" x2="887.5" y2="756.5" stroke="rgba(140,140,140,0.45)" stroke-width="1" stroke-dasharray="1,1" stroke-dashoffset="1" shape-rendering="crispEdges"/>
<line x1="887.5" y1="594.5" x2="887.5" y2="596.5" stroke="rgba(140,140,140,0.45)" stroke-width="1"/>
<line x1="887.5" y1="756.5" x2="887.5" y2="758.5" stroke="rgba(140,140,140,0.45)" stroke-width="1"/>
<line x1="400.5" y1="756.5" x2="908.5" y2="756.5" stroke="#222" stroke-width="1"/>
<line x1="404.5" y1="760.5" x2="404.5" y2="592.5" stroke="#4a4a4a" stroke-width="1"/>
<polygon points="906.5,753.5 906.5,759.5 911.5,756.5" fill="#801f1f"/>
<polygon points="401.5,594.5 407.5,594.5 404.5,589.5" fill="#801f1f"/>
<line x1="400.5" y1="756.5" x2="908.5" y2="756.5" stroke="#222" stroke-opacity="0.5" stroke-width="1"/>
<text transform="translate(455.8,770.6) scale(1,1.1)" font-family="'Liberation Mono', monospace" font-size="11.9" text-anchor="middle" fill="#000" stroke="#000" stroke-width="0.08">20:10</text>
<text transform="translate(539.1,770.6) scale(1,1.1)" font-family="'Liberation Mono', monospace" font-size="11.9" text-anchor="middle" fill="#000" stroke="#000" stroke-width="0.08">20:20</text>
<text transform="translate(622.4,770.6) scale(1,1.1)" font-family="'Liberation Mono', monospace" font-size="11.9" text-anchor="middle" fill="#000" stroke="#000" stroke-width="0.08">20:30</text>
<text transform="translate(705.7,770.6) scale(1,1.1)" font-family="'Liberation Mono', monospace" font-size="11.9" text-anchor="middle" fill="#000" stroke="#000" stroke-width="0.08">20:40</text>
<text transform="translate(789.0,770.6) scale(1,1.1)" font-family="'Liberation Mono', monospace" font-size="11.9" text-anchor="middle" fill="#000" stroke="#000" stroke-width="0.08">20:50</text>
<text transform="translate(872.3,770.6) scale(1,1.1)" font-family="'Liberation Mono', monospace" font-size="11.9" text-anchor="middle" fill="#000" stroke="#000" stroke-width="0.08">21:00</text>
<rect x="802.6" y="595.8" width="1.7" height="3" fill="#00d000"/>
<rect x="0" y="0" width="959" height="35" fill="url(#chrome)"/>
<rect x="0" y="34" width="959" height="1" fill="#a9a9a9"/>
<rect x="56.5" y="3.5" width="920" height="26" rx="3" ry="3" fill="#fff" stroke="#a6a6a6" stroke-width="1"/>
<path d="M2.4,16.2 H14.2 M9.2,10.9 L14.5,16.2 L9.2,21.5" fill="none" stroke="#b4b4b4" stroke-width="2.9" stroke-linecap="round" stroke-linejoin="round"/>
<path d="M2.4,16.2 H14.2 M9.2,10.9 L14.5,16.2 L9.2,21.5" fill="none" stroke="#d0d0d0" stroke-width="1.3" stroke-linecap="round" stroke-linejoin="round"/>
<path d="M41.10,12.41 A5.6,5.6 0 1 0 42.35,19.50" fill="none" stroke="#555" stroke-width="3.2"/>
<polygon points="44.8,9 44.8,15.8 38.2,15.8" fill="#555"/>
<path d="M64.5,9.5 H70.8 L74.5,13.2 V23.5 H64.5 Z" fill="url(#pg)" stroke="#8c8c8c" stroke-width="1"/>
<path d="M70.8,9.5 V13.2 H74.5" fill="#fff" stroke="#8c8c8c" stroke-width="1"/>
<text x="82.5" y="21.6" font-family="'Liberation Sans', sans-serif" font-size="15.7" fill="#222" textLength="133.5" lengthAdjust="spacingAndGlyphs">192.168.1.211<tspan fill="#8c8c8c">:8888</tspan></text>
<path d="M947.50,8.90 L950.03,13.72 L955.39,14.64 L951.59,18.53 L952.38,23.91 L947.50,21.50 L942.62,23.91 L943.41,18.53 L939.61,14.64 L944.97,13.72 Z" fill="#fff" stroke="#4a4a4a" stroke-width="1.3" stroke-linejoin="round"/>
<path d="M885.5,35.5 V62 Q885.5,66 889.5,66 H965 V35.5 Z" fill="url(#orng)" stroke="#e38d12" stroke-width="1"/>
<text x="925" y="58" font-family="'Liberation Sans', sans-serif" font-size="19.5" fill="#000" stroke="#f4b24a" stroke-width="0.25">Menu</text>
<path d="M12,629 V602 Q12,598 16,598 H965 V629 Z" fill="url(#orng)"/>
<path d="M12.5,629 V602 Q12.5,598.5 16.5,598.5 H965" fill="none" stroke="#e38d12" stroke-width="1"/>
<rect x="0" y="629" width="959" height="1" fill="#dcdcdc"/>
<rect x="55.5" y="601.5" width="25" height="25" rx="3" fill="url(#btn)" stroke="#d9d9d9" stroke-width="1"/>
<path d="M63.5,614 L68,609.3 L72.5,614" fill="none" stroke="#e8850c" stroke-width="1.6"/><rect x="64.6" y="613" width="6.8" height="5" fill="#e8850c"/><rect x="67" y="615" width="2" height="3" fill="#fff"/>
<rect x="575.5" y="601.5" width="160" height="25" rx="3" fill="url(#btn)" stroke="#d9d9d9" stroke-width="1"/>
<circle cx="588.6" cy="614.3" r="4.6" fill="#e8850c"/><path d="M588.6,610.8 V614.5 L590.6,616.8" fill="none" stroke="#fff" stroke-width="0.9"/>
<text x="615.2" y="617.3" font-family="'Liberation Sans', sans-serif" font-size="10" font-weight="bold" fill="#e8850c" text-anchor="middle">H</text>
<text x="642.2" y="617.3" font-family="'Liberation Sans', sans-serif" font-size="10" font-weight="bold" fill="#e8850c" text-anchor="middle">D</text>
<text x="669.4" y="617.3" font-family="'Liberation Sans', sans-serif" font-size="10" font-weight="bold" fill="#e8850c" text-anchor="middle">W</text>
<text x="697.5" y="617.3" font-family="'Liberation Sans', sans-serif" font-size="10" font-weight="bold" fill="#e8850c" text-anchor="middle">M</text>
<text x="723.9" y="617.3" font-family="'Liberation Sans', sans-serif" font-size="10" font-weight="bold" fill="#e8850c" text-anchor="middle">Y</text>
<rect x="740.5" y="601.5" width="97" height="25" rx="3" fill="url(#btn)" stroke="#d9d9d9" stroke-width="1"/>
<path d="M754,611 V613 M754,615.5 V617.5" stroke="#e8850c" stroke-width="1.5"/>
<path d="M776,610.5 L779.5,614 L776,617.5" fill="none" stroke="#e8850c" stroke-width="1.5"/>
<circle cx="802.6" cy="612.5" r="3.5" fill="none" stroke="#e8850c" stroke-width="1.5"/><path d="M800,615.5 L797.5,618" stroke="#e8850c" stroke-width="1.5"/>
<circle cx="826.4" cy="612.5" r="3.5" fill="none" stroke="#e8850c" stroke-width="1.5"/><path d="M823.8,615.5 L821.3,618" stroke="#e8850c" stroke-width="1.5"/>
<rect x="842.5" y="601.5" width="78" height="25" rx="3" fill="url(#btn)" stroke="#d9d9d9" stroke-width="1"/>
<text x="861" y="617" font-family="'Liberation Sans', sans-serif" font-size="10" fill="#e8850c" text-anchor="middle">All</text>
<text x="898.7" y="617" font-family="'Liberation Sans', sans-serif" font-size="10" fill="#e8850c" text-anchor="middle">None</text>
<text x="738.5" y="623" font-family="'Liberation Sans', sans-serif" font-size="18.6" font-weight="bold" fill="#efefef" fill-opacity="0.86">http://www.tecmint.com</text>
</svg></body></html>
